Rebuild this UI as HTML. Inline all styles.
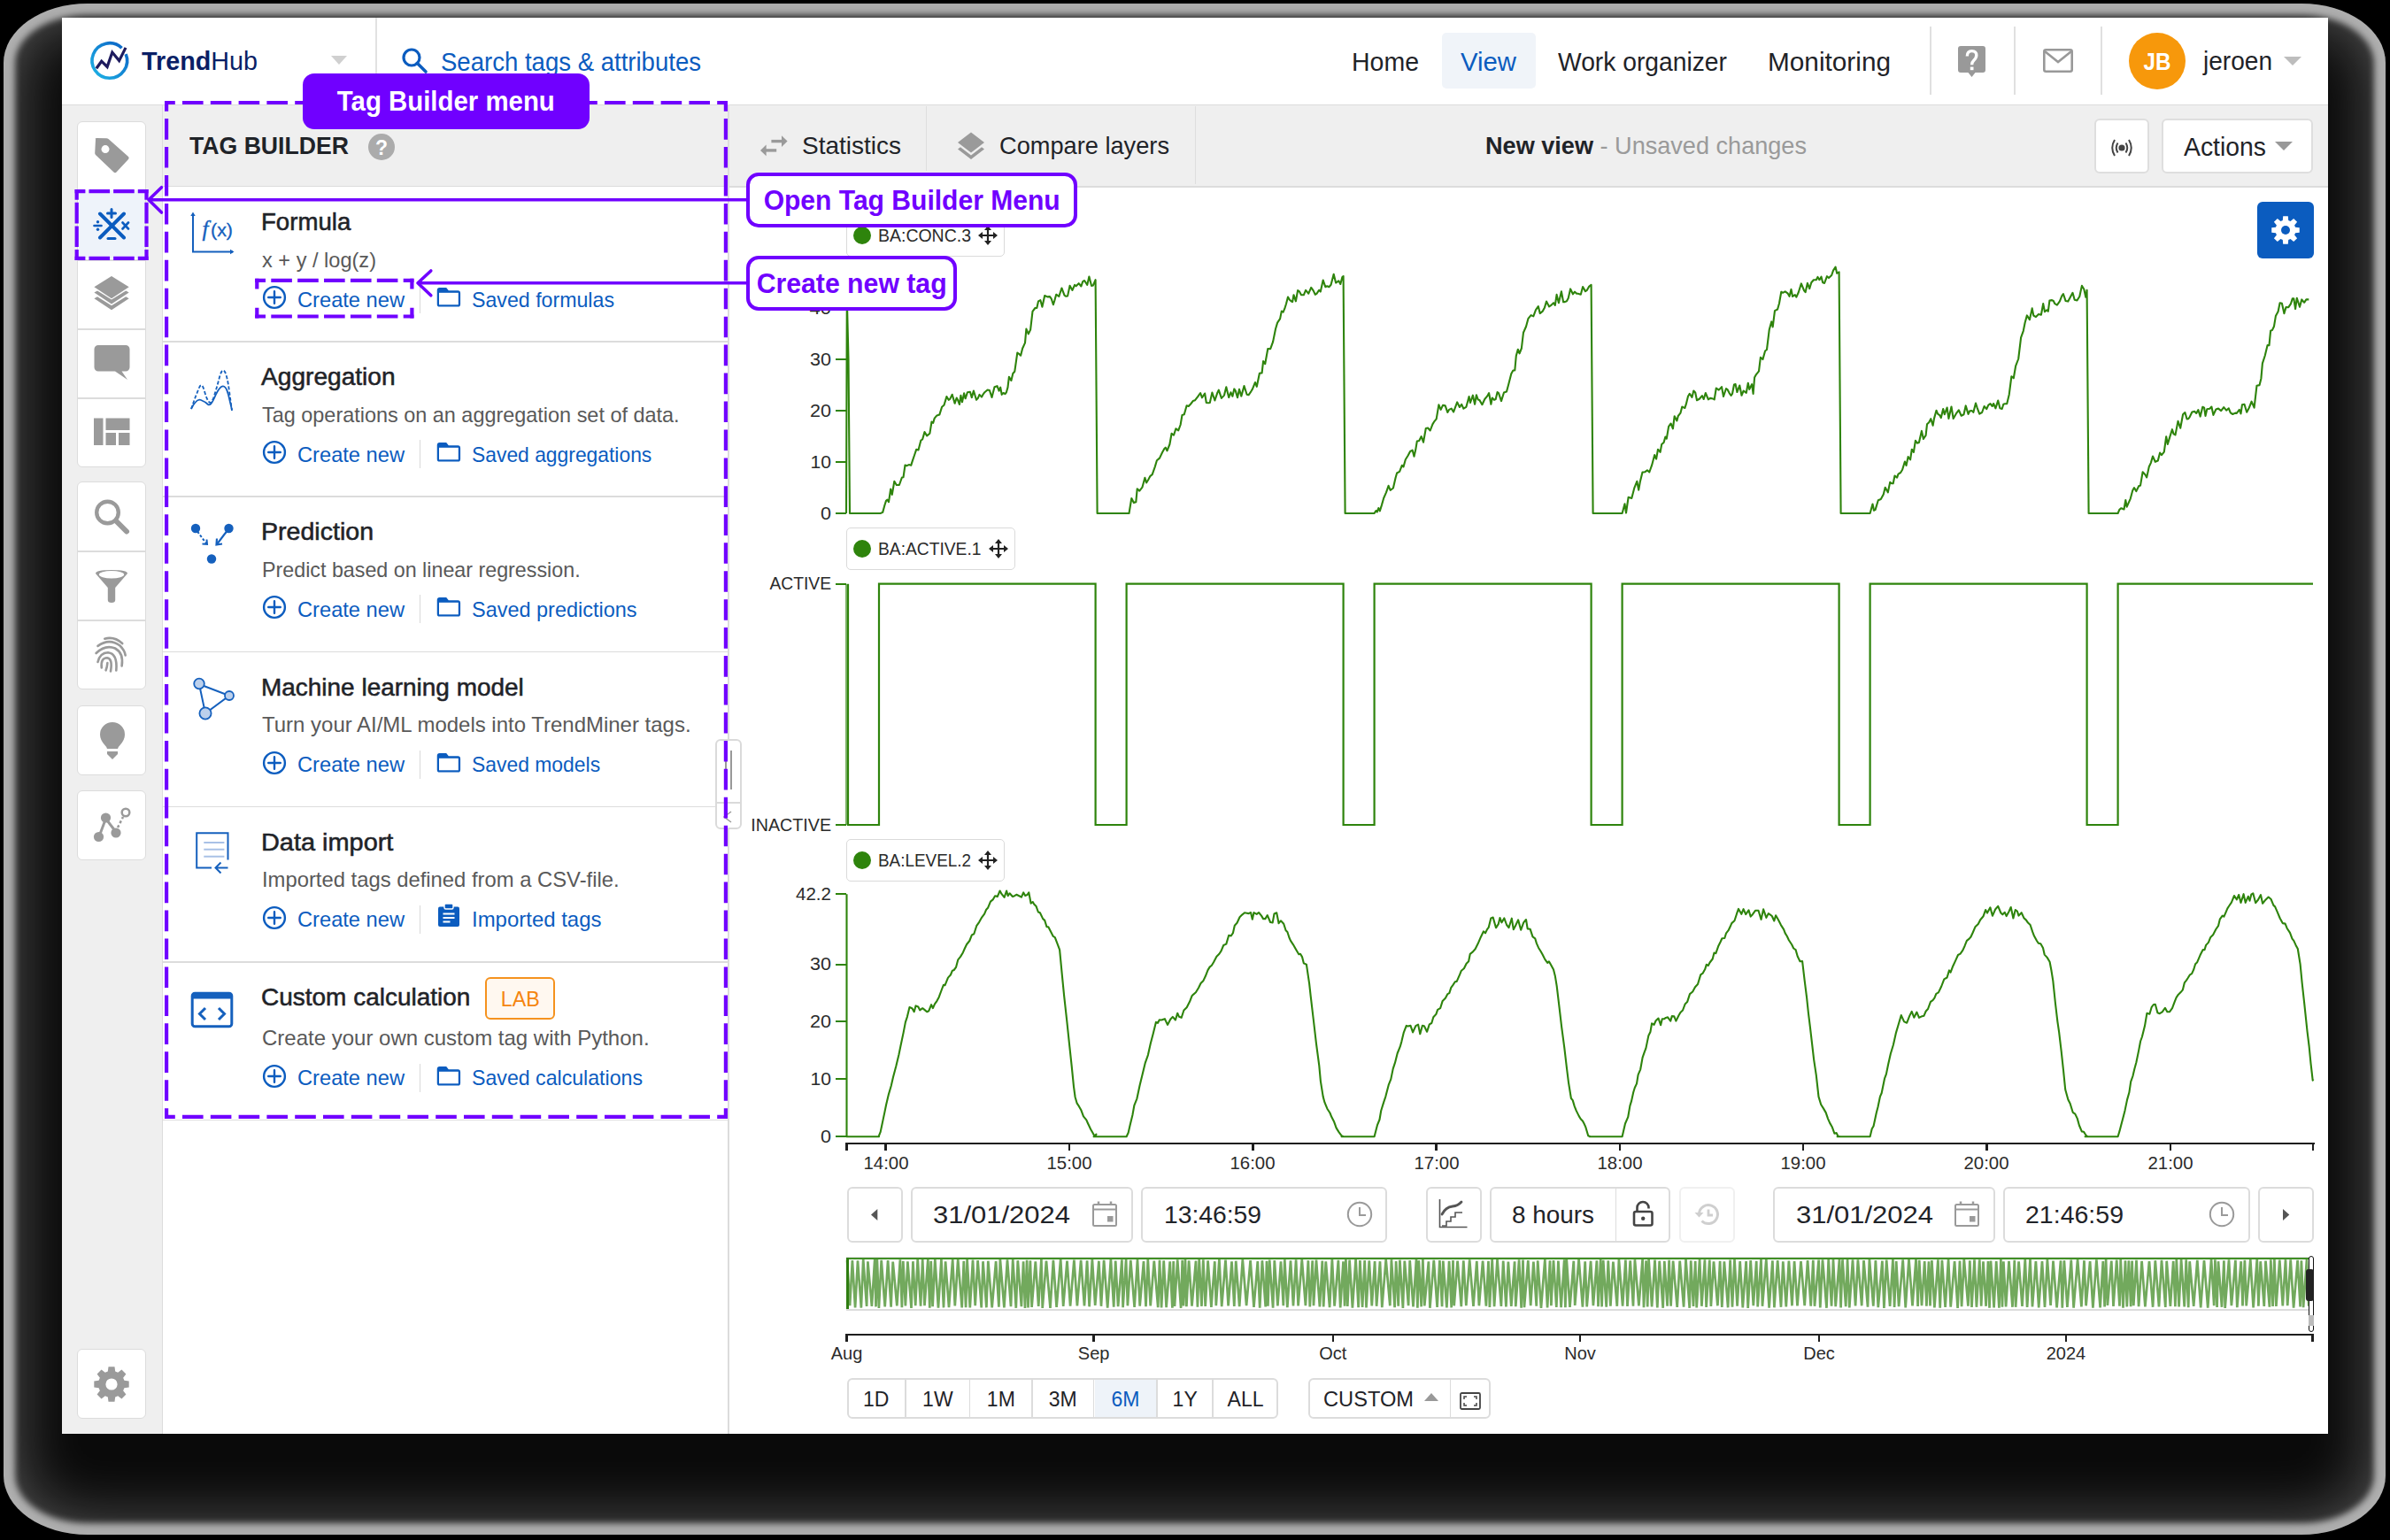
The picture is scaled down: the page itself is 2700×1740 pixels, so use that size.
<!DOCTYPE html><html><head><meta charset="utf-8"><style>
html,body{margin:0;padding:0;}
body{width:2700px;height:1740px;background:#000;position:relative;overflow:hidden;font-family:"Liberation Sans",sans-serif;}
.t{position:absolute;line-height:1;white-space:nowrap;}
.b{position:absolute;box-sizing:border-box;}
.s{position:absolute;overflow:visible;}
</style></head><body>
<div class="b" style="left:4px;top:4px;width:2691px;height:1730px;border-radius:95px / 67px;background:#0a0a0a;box-shadow:inset 0 0 7px 13px rgba(255,255,255,0.58), inset 0 0 70px 16px rgba(255,255,255,0.3);"></div>
<div class="b" style="left:70px;top:20px;width:2560px;height:1600px;background:#fff;overflow:hidden;"></div>
<div class="b" style="left:70px;top:118px;width:2560px;height:1px;background:#dcdcdc;"></div>
<div class="b" style="left:424px;top:20px;width:2px;height:98px;background:#e2e2e2;"></div>
<svg class="s" style="left:102px;top:48px;" width="44" height="44" viewBox="0 0 44 44"><defs><linearGradient id="lg" x1="0" y1="1" x2="1" y2="0"><stop offset="0" stop-color="#1fb5e6"/><stop offset="1" stop-color="#0a5fc4"/></linearGradient></defs>
<path d="M35.55 6.26 A19.8 19.8 0 1 0 40.16 13.08" fill="none" stroke="url(#lg)" stroke-width="3.6"/>
<polyline points="6.9,29.2 12.7,21.2 19.1,27.5 24.8,11.1 32.6,20.6 40,5.9" fill="none" stroke="#1e1b5e" stroke-width="3.2" stroke-linejoin="miter" stroke-linecap="butt"/></svg>
<div class="t" style="left:160.0px;top:54.2px;font-size:30px;color:#0a1f66;font-weight:400;transform:scaleX(0.9581);transform-origin:0 50%;"><b>Trend</b><span style="font-weight:400">Hub</span></div>
<svg class="s" style="left:374px;top:63px;" width="18" height="10" viewBox="0 0 18 10"><path d="M0 0 L18 0 L9 10Z" fill="#d0d0d0"/></svg>
<svg class="s" style="left:453px;top:53px;" width="32" height="32" viewBox="0 0 32 32"><circle cx="12" cy="12" r="9" fill="none" stroke="#0b5cbf" stroke-width="3.2"/><path d="M18.5 18.5 L28 28" stroke="#0b5cbf" stroke-width="3.6" stroke-linecap="round"/></svg>
<div class="t" style="left:498.0px;top:56.0px;font-size:29px;color:#0b5cbf;font-weight:400;transform:scaleX(0.9499);transform-origin:0 50%;">Search tags &amp; attributes</div>
<div class="b" style="left:1629px;top:37px;width:106px;height:63px;background:#f0f4f9;border-radius:5px;"></div>
<div class="t" style="left:1527.0px;top:55.3px;font-size:30px;color:#1f2328;font-weight:400;transform:scaleX(0.9496);transform-origin:0 50%;">Home</div>
<div class="t" style="left:1650.0px;top:55.3px;font-size:30px;color:#0b5cbf;font-weight:400;transform:scaleX(0.9770);transform-origin:0 50%;">View</div>
<div class="t" style="left:1760.0px;top:55.3px;font-size:30px;color:#1f2328;font-weight:400;transform:scaleX(0.9415);transform-origin:0 50%;">Work organizer</div>
<div class="t" style="left:1997.0px;top:55.3px;font-size:30px;color:#1f2328;font-weight:400;transform:scaleX(0.9923);transform-origin:0 50%;">Monitoring</div>
<div class="b" style="left:2180px;top:30px;width:2px;height:77px;background:#e0e0e0;"></div>
<div class="b" style="left:2275px;top:30px;width:2px;height:77px;background:#e0e0e0;"></div>
<div class="b" style="left:2373px;top:30px;width:2px;height:77px;background:#e0e0e0;"></div>
<svg class="s" style="left:2212px;top:52px;" width="31" height="35" viewBox="0 0 31 35"><path d="M3 0 H28 A3 3 0 0 1 31 3 V27 A3 3 0 0 1 28 30 H19.5 L15.5 35 L11.5 30 H3 A3 3 0 0 1 0 27 V3 A3 3 0 0 1 3 0Z" fill="#999"/><path d="M10.3 11.4 Q10.3 5.6 15.6 5.6 Q20.8 5.6 20.8 10.6 Q20.8 13.6 17.8 16.2 Q15.6 18.2 15.6 21.3" fill="none" stroke="#fff" stroke-width="3.4"/><rect x="13.8" y="23.6" width="3.7" height="3.6" fill="#fff"/></svg>
<svg class="s" style="left:2308px;top:55px;" width="34" height="27" viewBox="0 0 34 27"><rect x="1.3" y="1.3" width="31.4" height="24.4" rx="2" fill="none" stroke="#999" stroke-width="2.6"/><path d="M2 3 L17 15 L32 3" fill="none" stroke="#999" stroke-width="2.6"/></svg>
<div class="b" style="left:2405px;top:37px;width:64px;height:64px;background:#f7980b;border-radius:50%;"></div>
<div class="t" style="left:2405.0px;top:55.8px;font-size:28px;color:#fff;font-weight:700;width:64px;text-align:center;transform:scaleX(0.8660);transform-origin:50% 50%;">JB</div>
<div class="t" style="left:2488.5px;top:53.9px;font-size:30px;color:#1f2328;font-weight:400;transform:scaleX(0.9352);transform-origin:0 50%;">jeroen</div>
<svg class="s" style="left:2580px;top:64px;" width="20" height="10" viewBox="0 0 20 10"><path d="M0 0 L20 0 L10 10Z" fill="#bdbdbd"/></svg>
<div class="b" style="left:70px;top:119px;width:114px;height:1501px;background:#efefef;"></div>
<div class="b" style="left:183px;top:119px;width:1px;height:1501px;background:#dcdcdc;"></div>
<div class="b" style="left:87px;top:137px;width:78px;height:391px;background:#fff;border:1.5px solid #dcdcdc;border-radius:6px;"></div>
<div class="b" style="left:88px;top:215px;width:76px;height:1.5px;background:#dcdcdc;"></div>
<div class="b" style="left:88px;top:293px;width:76px;height:1.5px;background:#dcdcdc;"></div>
<div class="b" style="left:88px;top:371px;width:76px;height:1.5px;background:#dcdcdc;"></div>
<div class="b" style="left:88px;top:449px;width:76px;height:1.5px;background:#dcdcdc;"></div>
<div class="b" style="left:87px;top:544px;width:78px;height:235px;background:#fff;border:1.5px solid #dcdcdc;border-radius:6px;"></div>
<div class="b" style="left:88px;top:622px;width:76px;height:1.5px;background:#dcdcdc;"></div>
<div class="b" style="left:88px;top:700px;width:76px;height:1.5px;background:#dcdcdc;"></div>
<div class="b" style="left:87px;top:797px;width:78px;height:79px;background:#fff;border:1.5px solid #dcdcdc;border-radius:6px;"></div>
<div class="b" style="left:87px;top:893px;width:78px;height:79px;background:#fff;border:1.5px solid #dcdcdc;border-radius:6px;"></div>
<div class="b" style="left:87px;top:1524px;width:78px;height:79px;background:#fff;border:1.5px solid #dcdcdc;border-radius:6px;"></div>
<div class="b" style="left:88.5px;top:215px;width:75px;height:77px;background:#eef3fa;"></div>
<svg class="s" style="left:104px;top:154px;" width="44" height="44" viewBox="0 0 44 44"><path d="M4 3.5 Q3 2 5 2 L16.5 2.2 Q17.5 2.2 18.5 3 L41 23 Q42.5 24.5 41 26 L27.5 40.5 Q26 42 24.5 40.5 L4 21 Q3.2 20 3.2 19 Z" fill="#9a9a9a"/><circle cx="15" cy="14.6" r="4.5" fill="#fff"/></svg>
<svg class="s" style="left:104px;top:232px;" width="44" height="44" viewBox="0 0 44 44"><g stroke="#0b5cbf" stroke-linecap="round" fill="none">
<path d="M9 9.5 L36 36.5 M36 9.5 L9 36.5" stroke-width="4"/>
<path d="M22 4.5 V13.5 M17.5 9 H26.5" stroke-width="3"/>
<path d="M18 37.5 H26" stroke-width="3"/>
<path d="M2.5 23 H10.5" stroke-width="2.6"/>
<path d="M34.5 19.5 L41 26.5 M41 19.5 L34.5 26.5" stroke-width="2.6"/>
</g><circle cx="6.5" cy="18.8" r="1.7" fill="#0b5cbf"/><circle cx="6.5" cy="27.2" r="1.7" fill="#0b5cbf"/></svg>
<svg class="s" style="left:104px;top:310px;" width="44" height="44" viewBox="0 0 44 44"><path d="M2.4 14.3 L22 2 L41.7 14.3 L22 27.3Z" fill="#9a9a9a"/><path d="M2.4 20.5 L6 18.4 L22 28.6 L38.2 18.4 L41.7 20.5 L22 33.6Z" fill="#9a9a9a"/><path d="M2.4 27.3 L6 25.2 L22 35.3 L38.2 25.2 L41.7 27.3 L22 40.2Z" fill="#9a9a9a"/></svg>
<svg class="s" style="left:104px;top:388px;" width="44" height="44" viewBox="0 0 44 44"><path d="M7 2 H38 A4.5 4.5 0 0 1 42.5 6.5 V27 A4.5 4.5 0 0 1 38 31.5 H33.5 L40 41 L26 31.5 H7 A4.5 4.5 0 0 1 2.5 27 V6.5 A4.5 4.5 0 0 1 7 2Z" fill="#9a9a9a"/></svg>
<svg class="s" style="left:104px;top:470px;" width="44" height="36" viewBox="0 0 44 36"><rect x="2" y="2.5" width="10.5" height="30.5" fill="#9a9a9a"/><rect x="15.5" y="2.5" width="27" height="13.5" fill="#9a9a9a"/><rect x="15.5" y="19" width="11.5" height="14" fill="#9a9a9a"/><rect x="30" y="19" width="12.5" height="14" fill="#9a9a9a"/></svg>
<svg class="s" style="left:104px;top:562px;" width="44" height="44" viewBox="0 0 44 44"><circle cx="17.5" cy="17" r="12.3" fill="none" stroke="#9a9a9a" stroke-width="4.4"/><path d="M27 26.5 L39 38.5" stroke="#9a9a9a" stroke-width="6" stroke-linecap="round"/></svg>
<svg class="s" style="left:104px;top:642px;" width="44" height="40" viewBox="0 0 44 40"><path d="M4 6 Q4 2 22 2 Q40 2 40 6 L26.2 22 V36 Q26.2 39 22 39 Q17.8 39 17.8 36 V22 Z" fill="#9a9a9a"/><ellipse cx="22" cy="7.2" rx="14.2" ry="4.2" fill="#fff"/></svg>
<svg class="s" style="left:100px;top:710px;" width="52" height="60" viewBox="0 0 52 60"><g fill="none" stroke="#9a9a9a" stroke-width="2.6" stroke-linecap="round">
<path d="M18.3 11.7 Q29 8.6 38.2 17"/>
<path d="M10.5 19.9 Q23.5 10.5 35.5 19.5 Q41 25 41.7 30.5"/>
<path d="M8.6 28 Q19 18 30 22.5 Q40 28 37.6 42.5"/>
<path d="M10.5 38 Q13 27.5 22 27.3 Q33 28.5 31.3 47.5"/>
<path d="M14.8 44.5 Q13.5 33.5 21 33.3 Q27.5 34 25 48.5"/>
<path d="M21.4 39 Q21 44 19.6 47.3"/>
</g></svg>
<svg class="s" style="left:110px;top:814px;" width="34" height="46" viewBox="0 0 34 46"><path d="M17 2 A14 14 0 0 1 31 16 Q31 22 25.5 28 Q23 30.5 23 32 H11 Q11 30.5 8.5 28 Q3 22 3 16 A14 14 0 0 1 17 2Z" fill="#9a9a9a"/><path d="M11 35 H23 V38 Q20 41 17 44 Q14 41 11 38Z" fill="#9a9a9a"/></svg>
<svg class="s" style="left:104px;top:910px;" width="44" height="44" viewBox="0 0 44 44"><g stroke="#9a9a9a" stroke-width="3" fill="none"><path d="M8 35 L15.5 15 L27 30"/></g><circle cx="15.5" cy="14" r="5.6" fill="#9a9a9a"/><circle cx="7.5" cy="35.5" r="5.6" fill="#9a9a9a"/><circle cx="27" cy="31" r="5.6" fill="#9a9a9a"/><path d="M29 25 L35 13" stroke="#9a9a9a" stroke-width="2.5" stroke-dasharray="3 2.5"/><circle cx="38" cy="8" r="4.3" fill="none" stroke="#9a9a9a" stroke-width="2.5"/></svg>
<svg class="s" style="left:104px;top:1542px;" width="44" height="44" viewBox="0 0 44 44"><path d="M36.40 17.82 L41.69 18.51 L41.69 25.49 L36.40 26.18 L35.14 29.23 L38.39 33.46 L33.46 38.39 L29.23 35.14 L26.18 36.40 L25.49 41.69 L18.51 41.69 L17.82 36.40 L14.77 35.14 L10.54 38.39 L5.61 33.46 L8.86 29.23 L7.60 26.18 L2.31 25.49 L2.31 18.51 L7.60 17.82 L8.86 14.77 L5.61 10.54 L10.54 5.61 L14.77 8.86 L17.82 7.60 L18.51 2.31 L25.49 2.31 L26.18 7.60 L29.23 8.86 L33.46 5.61 L38.39 10.54 L35.14 14.77Z" fill="#9a9a9a"/><circle cx="22" cy="22" r="6.6" fill="#fff"/></svg>
<div class="b" style="left:184px;top:119px;width:638px;height:92px;background:#efefef;"></div>
<div class="b" style="left:184px;top:210px;width:638px;height:1px;background:#dcdcdc;"></div>
<div class="b" style="left:184px;top:211px;width:638px;height:1409px;background:#fff;"></div>
<div class="b" style="left:822px;top:119px;width:1.5px;height:1501px;background:#dcdcdc;"></div>
<div class="t" style="left:213.5px;top:150.9px;font-size:28px;color:#1f2328;font-weight:700;transform:scaleX(0.9511);transform-origin:0 50%;">TAG BUILDER</div>
<svg class="s" style="left:416px;top:151px;" width="30" height="30" viewBox="0 0 30 30"><circle cx="15" cy="15" r="15" fill="#ababab"/><text x="15" y="23.5" font-family="Liberation Sans" font-weight="700" font-size="23" fill="#fff" text-anchor="middle">?</text></svg>
<div class="b" style="left:184px;top:385px;width:638px;height:1.5px;background:#dcdcdc;"></div>
<div class="t" style="left:294.5px;top:237.3px;font-size:28px;color:#1f2328;font-weight:400;-webkit-text-stroke:0.55px #1f2328;transform:scaleX(0.9863);transform-origin:0 50%;">Formula</div>
<div class="t" style="left:295.5px;top:281.7px;font-size:24px;color:#595959;font-weight:400;transform:scaleX(0.9819);transform-origin:0 50%;">x + y / log(z)</div>
<svg class="s" style="left:297px;top:323px;" width="26" height="26" viewBox="0 0 26 26"><circle cx="13" cy="13" r="11.9" fill="none" stroke="#0b5cbf" stroke-width="2.4"/><path d="M13 6.2 V19.8 M6.2 13 H19.8" stroke="#0b5cbf" stroke-width="2.4" stroke-linecap="round"/></svg>
<div class="t" style="left:336.0px;top:326.7px;font-size:24px;color:#0b5cbf;font-weight:400;transform:scaleX(0.9859);transform-origin:0 50%;">Create new</div>
<div class="b" style="left:473.5px;top:322px;width:1.5px;height:32px;background:#d9d9d9;"></div>
<svg class="s" style="left:493px;top:324px;" width="28" height="24" viewBox="0 0 28 24"><path d="M0.75 4 Q0.75 1.1 3.6 1.1 H11.2 L13.8 4.3 H24.3 Q27.1 4.3 27.1 7.2 V19.7 Q27.1 22.6 24.3 22.6 H3.6 Q0.75 22.6 0.75 19.7 Z" fill="#0b5cbf"/><rect x="3" y="6.8" width="21.8" height="13.5" fill="#fff"/></svg>
<div class="t" style="left:532.5px;top:326.7px;font-size:24px;color:#0b5cbf;font-weight:400;transform:scaleX(0.9655);transform-origin:0 50%;">Saved formulas</div>
<div class="b" style="left:184px;top:560px;width:638px;height:1.5px;background:#dcdcdc;"></div>
<div class="t" style="left:294.5px;top:412.3px;font-size:28px;color:#1f2328;font-weight:400;-webkit-text-stroke:0.55px #1f2328;transform:scaleX(1.0039);transform-origin:0 50%;">Aggregation</div>
<div class="t" style="left:295.5px;top:456.7px;font-size:24px;color:#595959;font-weight:400;transform:scaleX(0.9763);transform-origin:0 50%;">Tag operations on an aggregation set of data.</div>
<svg class="s" style="left:297px;top:498px;" width="26" height="26" viewBox="0 0 26 26"><circle cx="13" cy="13" r="11.9" fill="none" stroke="#0b5cbf" stroke-width="2.4"/><path d="M13 6.2 V19.8 M6.2 13 H19.8" stroke="#0b5cbf" stroke-width="2.4" stroke-linecap="round"/></svg>
<div class="t" style="left:336.0px;top:501.7px;font-size:24px;color:#0b5cbf;font-weight:400;transform:scaleX(0.9859);transform-origin:0 50%;">Create new</div>
<div class="b" style="left:473.5px;top:497px;width:1.5px;height:32px;background:#d9d9d9;"></div>
<svg class="s" style="left:493px;top:499px;" width="28" height="24" viewBox="0 0 28 24"><path d="M0.75 4 Q0.75 1.1 3.6 1.1 H11.2 L13.8 4.3 H24.3 Q27.1 4.3 27.1 7.2 V19.7 Q27.1 22.6 24.3 22.6 H3.6 Q0.75 22.6 0.75 19.7 Z" fill="#0b5cbf"/><rect x="3" y="6.8" width="21.8" height="13.5" fill="#fff"/></svg>
<div class="t" style="left:532.5px;top:501.7px;font-size:24px;color:#0b5cbf;font-weight:400;transform:scaleX(0.9522);transform-origin:0 50%;">Saved aggregations</div>
<div class="b" style="left:184px;top:735.5px;width:638px;height:1.5px;background:#dcdcdc;"></div>
<div class="t" style="left:294.5px;top:587.3px;font-size:28px;color:#1f2328;font-weight:400;-webkit-text-stroke:0.55px #1f2328;transform:scaleX(1.0208);transform-origin:0 50%;">Prediction</div>
<div class="t" style="left:295.5px;top:631.7px;font-size:24px;color:#595959;font-weight:400;transform:scaleX(0.9696);transform-origin:0 50%;">Predict based on linear regression.</div>
<svg class="s" style="left:297px;top:673px;" width="26" height="26" viewBox="0 0 26 26"><circle cx="13" cy="13" r="11.9" fill="none" stroke="#0b5cbf" stroke-width="2.4"/><path d="M13 6.2 V19.8 M6.2 13 H19.8" stroke="#0b5cbf" stroke-width="2.4" stroke-linecap="round"/></svg>
<div class="t" style="left:336.0px;top:676.7px;font-size:24px;color:#0b5cbf;font-weight:400;transform:scaleX(0.9859);transform-origin:0 50%;">Create new</div>
<div class="b" style="left:473.5px;top:672px;width:1.5px;height:32px;background:#d9d9d9;"></div>
<svg class="s" style="left:493px;top:674px;" width="28" height="24" viewBox="0 0 28 24"><path d="M0.75 4 Q0.75 1.1 3.6 1.1 H11.2 L13.8 4.3 H24.3 Q27.1 4.3 27.1 7.2 V19.7 Q27.1 22.6 24.3 22.6 H3.6 Q0.75 22.6 0.75 19.7 Z" fill="#0b5cbf"/><rect x="3" y="6.8" width="21.8" height="13.5" fill="#fff"/></svg>
<div class="t" style="left:532.5px;top:676.7px;font-size:24px;color:#0b5cbf;font-weight:400;transform:scaleX(0.9776);transform-origin:0 50%;">Saved predictions</div>
<div class="b" style="left:184px;top:910.5px;width:638px;height:1.5px;background:#dcdcdc;"></div>
<div class="t" style="left:294.5px;top:762.8px;font-size:28px;color:#1f2328;font-weight:400;-webkit-text-stroke:0.55px #1f2328;transform:scaleX(0.9984);transform-origin:0 50%;">Machine learning model</div>
<div class="t" style="left:295.5px;top:807.2px;font-size:24px;color:#595959;font-weight:400;transform:scaleX(0.9989);transform-origin:0 50%;">Turn your AI/ML models into TrendMiner tags.</div>
<svg class="s" style="left:297px;top:848.5px;" width="26" height="26" viewBox="0 0 26 26"><circle cx="13" cy="13" r="11.9" fill="none" stroke="#0b5cbf" stroke-width="2.4"/><path d="M13 6.2 V19.8 M6.2 13 H19.8" stroke="#0b5cbf" stroke-width="2.4" stroke-linecap="round"/></svg>
<div class="t" style="left:336.0px;top:852.2px;font-size:24px;color:#0b5cbf;font-weight:400;transform:scaleX(0.9859);transform-origin:0 50%;">Create new</div>
<div class="b" style="left:473.5px;top:847.5px;width:1.5px;height:32px;background:#d9d9d9;"></div>
<svg class="s" style="left:493px;top:849.5px;" width="28" height="24" viewBox="0 0 28 24"><path d="M0.75 4 Q0.75 1.1 3.6 1.1 H11.2 L13.8 4.3 H24.3 Q27.1 4.3 27.1 7.2 V19.7 Q27.1 22.6 24.3 22.6 H3.6 Q0.75 22.6 0.75 19.7 Z" fill="#0b5cbf"/><rect x="3" y="6.8" width="21.8" height="13.5" fill="#fff"/></svg>
<div class="t" style="left:532.5px;top:852.2px;font-size:24px;color:#0b5cbf;font-weight:400;transform:scaleX(0.9540);transform-origin:0 50%;">Saved models</div>
<div class="b" style="left:184px;top:1086.0px;width:638px;height:1.5px;background:#dcdcdc;"></div>
<div class="t" style="left:294.5px;top:937.8px;font-size:28px;color:#1f2328;font-weight:400;-webkit-text-stroke:0.55px #1f2328;transform:scaleX(1.0323);transform-origin:0 50%;">Data import</div>
<div class="t" style="left:295.5px;top:982.2px;font-size:24px;color:#595959;font-weight:400;transform:scaleX(0.9920);transform-origin:0 50%;">Imported tags defined from a CSV-file.</div>
<svg class="s" style="left:297px;top:1023.5px;" width="26" height="26" viewBox="0 0 26 26"><circle cx="13" cy="13" r="11.9" fill="none" stroke="#0b5cbf" stroke-width="2.4"/><path d="M13 6.2 V19.8 M6.2 13 H19.8" stroke="#0b5cbf" stroke-width="2.4" stroke-linecap="round"/></svg>
<div class="t" style="left:336.0px;top:1027.2px;font-size:24px;color:#0b5cbf;font-weight:400;transform:scaleX(0.9859);transform-origin:0 50%;">Create new</div>
<div class="b" style="left:473.5px;top:1022.5px;width:1.5px;height:32px;background:#d9d9d9;"></div>
<svg class="s" style="left:494px;top:1019.5px;" width="26" height="28" viewBox="0 0 26 28"><path d="M3 4.5 H23 Q25 4.5 25 6.5 V25 Q25 27 23 27 H3 Q1 27 1 25 V6.5 Q1 4.5 3 4.5Z" fill="#0b5cbf"/><rect x="8" y="1" width="10" height="6" rx="1.5" fill="#0b5cbf" stroke="#fff" stroke-width="1.4"/><path d="M6.5 12.5 H19.5 M6.5 17 H19.5 M6.5 21.5 H14.5" stroke="#fff" stroke-width="2.2"/></svg>
<div class="t" style="left:532.5px;top:1027.2px;font-size:24px;color:#0b5cbf;font-weight:400;transform:scaleX(0.9983);transform-origin:0 50%;">Imported tags</div>
<div class="b" style="left:184px;top:1264.5px;width:638px;height:1.5px;background:#dcdcdc;"></div>
<div class="t" style="left:294.5px;top:1112.8px;font-size:28px;color:#1f2328;font-weight:400;-webkit-text-stroke:0.55px #1f2328;transform:scaleX(0.9993);transform-origin:0 50%;">Custom calculation</div>
<div class="t" style="left:295.5px;top:1161.2px;font-size:24px;color:#595959;font-weight:400;transform:scaleX(1.0001);transform-origin:0 50%;">Create your own custom tag with Python.</div>
<svg class="s" style="left:297px;top:1202.5px;" width="26" height="26" viewBox="0 0 26 26"><circle cx="13" cy="13" r="11.9" fill="none" stroke="#0b5cbf" stroke-width="2.4"/><path d="M13 6.2 V19.8 M6.2 13 H19.8" stroke="#0b5cbf" stroke-width="2.4" stroke-linecap="round"/></svg>
<div class="t" style="left:336.0px;top:1206.2px;font-size:24px;color:#0b5cbf;font-weight:400;transform:scaleX(0.9859);transform-origin:0 50%;">Create new</div>
<div class="b" style="left:473.5px;top:1201.5px;width:1.5px;height:32px;background:#d9d9d9;"></div>
<svg class="s" style="left:493px;top:1203.5px;" width="28" height="24" viewBox="0 0 28 24"><path d="M0.75 4 Q0.75 1.1 3.6 1.1 H11.2 L13.8 4.3 H24.3 Q27.1 4.3 27.1 7.2 V19.7 Q27.1 22.6 24.3 22.6 H3.6 Q0.75 22.6 0.75 19.7 Z" fill="#0b5cbf"/><rect x="3" y="6.8" width="21.8" height="13.5" fill="#fff"/></svg>
<div class="t" style="left:532.5px;top:1206.2px;font-size:24px;color:#0b5cbf;font-weight:400;transform:scaleX(0.9644);transform-origin:0 50%;">Saved calculations</div>
<div class="b" style="left:547.5px;top:1104px;width:79.5px;height:47.5px;border:2px solid #f5921e;border-radius:6px;background:#fff8f0;"></div>
<div class="t" style="left:547.5px;top:1117.2px;font-size:24px;color:#f5850f;font-weight:400;width:79.5px;text-align:center;transform:scaleX(0.9697);transform-origin:50% 50%;">LAB</div>
<svg class="s" style="left:214px;top:238px;" width="52" height="50" viewBox="0 0 52 50"><path d="M4 3 V46.5 H49" fill="none" stroke="#1560bd" stroke-width="2"/>
<path d="M1.3 6 L4 1.5 L6.7 6Z" fill="#1560bd"/><path d="M46 43.8 L50.5 46.5 L46 49.2Z" fill="#1560bd"/>
<text x="14.5" y="29" font-family="Liberation Serif" font-style="italic" font-size="25" fill="#1560bd" stroke="#1560bd" stroke-width="0.4">f</text>
<text x="24" y="28.5" font-family="Liberation Sans" font-size="21" fill="#1560bd" stroke="#1560bd" stroke-width="0.3" textLength="25" lengthAdjust="spacingAndGlyphs">(x)</text></svg>
<svg class="s" style="left:214px;top:412px;" width="52" height="54" viewBox="0 0 52 54"><path d="M2 50 Q6 38 11 26 Q14 19 17 30 Q19 38 22 42 Q24 45 27 38 Q31 26 34 14 Q37 3 40 8 Q43 14 45 30 L48 52" fill="none" stroke="#1560bd" stroke-width="1.8" stroke-dasharray="4 2.2"/>
<path d="M2 50 Q8 38 13 40 Q18 42 21 45 Q24 47 28 38 Q32 28 36 25 Q41 22 44 34 L48 51" fill="none" stroke="#1560bd" stroke-width="1.8"/></svg>
<svg class="s" style="left:214px;top:592px;" width="52" height="50" viewBox="0 0 52 50"><circle cx="7" cy="5" r="5.2" fill="#1560bd"/><circle cx="44.5" cy="5" r="5.2" fill="#1560bd"/><circle cx="25" cy="39.5" r="5.2" fill="#1560bd"/>
<path d="M9 8.5 L19 22" stroke="#1560bd" stroke-width="2" stroke-dasharray="3 2"/><path d="M14.5 22.5 L20 23 L19.5 17.5" fill="none" stroke="#1560bd" stroke-width="2"/>
<path d="M42 8.5 L31 23" stroke="#1560bd" stroke-width="2.2"/><path d="M31 16.5 L30.5 23.5 L37 22.5" fill="none" stroke="#1560bd" stroke-width="2.2"/></svg>
<svg class="s" style="left:215px;top:766px;" width="52" height="50" viewBox="0 0 52 50"><path d="M10 7 L44 20 L17 40Z" fill="none" stroke="#1560bd" stroke-width="2"/>
<circle cx="10" cy="6.5" r="5.8" fill="#bcd0ec" stroke="#1560bd" stroke-width="1.8"/><circle cx="44" cy="20" r="5" fill="#bcd0ec" stroke="#1560bd" stroke-width="1.8"/><circle cx="17" cy="40" r="6.6" fill="#bcd0ec" stroke="#1560bd" stroke-width="1.8"/></svg>
<svg class="s" style="left:214px;top:938px;" width="52" height="54" viewBox="0 0 52 54"><path d="M43.5 33.5 V3.3 H8.2 V42.5 H25" fill="none" stroke="#1560bd" stroke-width="2"/>
<path d="M16.3 14 H39.4 M16.3 21.8 H39.4 M16.3 29.7 H39.4" stroke="#a9c1e6" stroke-width="2"/>
<path d="M43.5 42.5 H29.5 M35.5 36.5 L29.5 42.5 L35.5 48.5" fill="none" stroke="#1560bd" stroke-width="2"/></svg>
<svg class="s" style="left:214.5px;top:1118.5px;" width="52" height="44" viewBox="0 0 52 44"><rect x="2.2" y="3.2" width="44.6" height="37.6" rx="3" fill="none" stroke="#1560bd" stroke-width="3"/><path d="M2.2 6 Q2.2 3.2 5 3.2 H44 Q46.8 3.2 46.8 6 V9.5 H2.2Z" fill="#1560bd"/>
<path d="M17 20 L10.5 26.5 L17 33 M32 20 L38.5 26.5 L32 33" fill="none" stroke="#1560bd" stroke-width="3"/></svg>
<div class="b" style="left:808px;top:834.5px;width:30px;height:102.5px;background:#fff;border:2px solid #dadada;border-radius:6px;"></div>
<div class="b" style="left:809px;top:906px;width:28px;height:1.5px;background:#dadada;"></div>
<div class="b" style="left:825px;top:848px;width:2px;height:44px;background:#999;"></div>
<div class="b" style="left:819px;top:848px;width:1.5px;height:44px;background:#999;"></div>
<svg class="s" style="left:815px;top:916px;" width="14" height="14" viewBox="0 0 14 14"><path d="M11 1 L3 7 L11 13" fill="none" stroke="#999" stroke-width="1.5"/></svg>
<div class="b" style="left:823.5px;top:119px;width:1806.5px;height:91px;background:#efefef;"></div>
<div class="b" style="left:823.5px;top:210px;width:1806.5px;height:1.5px;background:#dcdcdc;"></div>
<div class="b" style="left:1045.5px;top:120px;width:1.5px;height:73px;background:#dedede;"></div>
<div class="b" style="left:1349.5px;top:120px;width:1.5px;height:88px;background:#dedede;"></div>
<svg class="s" style="left:857px;top:152px;" width="34" height="28" viewBox="0 0 34 28"><path d="M14.4 7.6 H27" stroke="#9a9a9a" stroke-width="3.4"/><path d="M26 1.3 L32.6 7.6 L26 13.9Z" fill="#9a9a9a"/><path d="M8 17.9 H20.2" stroke="#9a9a9a" stroke-width="3.4"/><path d="M8.6 11.6 L2 17.9 L8.6 24.2Z" fill="#9a9a9a"/></svg>
<div class="t" style="left:905.5px;top:151.1px;font-size:28px;color:#1f2328;font-weight:400;transform:scaleX(0.9997);transform-origin:0 50%;">Statistics</div>
<svg class="s" style="left:1080px;top:144.5px;" width="34" height="34" viewBox="0 0 34 34"><path d="M2 16 L17 4.5 L32 16 L17 27.5Z" fill="#9a9a9a"/><path d="M2 23.5 L5 21.3 L17 30.4 L29 21.3 L32 23.5 L17 35Z" fill="#9a9a9a"/></svg>
<div class="t" style="left:1129.0px;top:151.1px;font-size:28px;color:#1f2328;font-weight:400;transform:scaleX(0.9715);transform-origin:0 50%;">Compare layers</div>
<div class="t" style="left:1678.0px;top:151.3px;font-size:28px;color:#1f2328;font-weight:400;transform:scaleX(0.9677);transform-origin:0 50%;"><b>New view</b><span style="color:#9a9a9a"> - Unsaved changes</span></div>
<div class="b" style="left:2366px;top:134px;width:62px;height:62px;background:#fff;border:2px solid #dedede;border-radius:6px;"></div>
<svg class="s" style="left:2381px;top:153.5px;" width="32" height="26" viewBox="0 0 32 26"><g fill="none" stroke="#444" stroke-width="2"><path d="M8 4 Q2.5 13 8 22"/><path d="M11.5 7.5 Q8 13 11.5 18.5"/><path d="M24 4 Q29.5 13 24 22"/><path d="M20.5 7.5 Q24 13 20.5 18.5"/></g><circle cx="16" cy="13" r="3.6" fill="#444"/></svg>
<div class="b" style="left:2442px;top:134px;width:171px;height:62px;background:#fff;border:2px solid #dedede;border-radius:6px;"></div>
<div class="t" style="left:2467.0px;top:151.5px;font-size:29px;color:#1f2328;font-weight:400;transform:scaleX(0.9778);transform-origin:0 50%;">Actions</div>
<svg class="s" style="left:2570px;top:160px;" width="20" height="10" viewBox="0 0 20 10"><path d="M0 0 L20 0 L10 10Z" fill="#999"/></svg>
<div class="b" style="left:2550px;top:228px;width:64px;height:64px;background:#0b5cbf;border-radius:6px;"></div>
<svg class="s" style="left:2566px;top:244px;" width="32" height="32" viewBox="0 0 32 32"><path d="M27.04 12.79 L31.75 13.21 L31.75 18.79 L27.04 19.21 L26.08 21.54 L29.11 25.17 L25.17 29.11 L21.54 26.08 L19.21 27.04 L18.79 31.75 L13.21 31.75 L12.79 27.04 L10.46 26.08 L6.83 29.11 L2.89 25.17 L5.92 21.54 L4.96 19.21 L0.25 18.79 L0.25 13.21 L4.96 12.79 L5.92 10.46 L2.89 6.83 L6.83 2.89 L10.46 5.92 L12.79 4.96 L13.21 0.25 L18.79 0.25 L19.21 4.96 L21.54 5.92 L25.17 2.89 L29.11 6.83 L26.08 10.46Z" fill="#fff"/><circle cx="16" cy="16" r="5" fill="#0b5cbf"/></svg>
<svg class="s" style="left:0px;top:0px;pointer-events:none;" width="2700" height="1740" viewBox="0 0 2700 1740"><polyline points="956.0,580.0 956.8,336.4 958.5,406.0 960.0,580.0 992.6,580.0 994.6,580.0 997.2,578.9 999.5,570.5 1001.0,565.9 1002.5,564.6 1004.0,567.2 1006.2,552.5 1007.8,558.9 1010.3,543.8 1012.8,548.0 1015.9,548.0 1018.9,539.5 1020.5,539.3 1022.5,525.5 1024.2,526.2 1026.8,525.1 1029.2,525.8 1030.7,521.2 1033.3,513.5 1035.2,507.8 1037.5,508.4 1040.3,497.7 1042.1,496.5 1044.5,488.1 1047.2,492.4 1050.4,489.7 1052.5,476.5 1054.2,477.8 1055.7,472.6 1058.4,469.4 1061.4,468.4 1064.1,459.8 1066.5,457.8 1069.4,448.1 1071.7,451.8 1073.2,450.9 1075.7,445.8 1078.6,455.8 1080.7,449.5 1082.2,452.3 1083.9,457.0 1085.4,446.8 1087.0,454.3 1089.1,444.4 1090.6,450.3 1093.0,443.2 1095.9,442.8 1097.8,449.1 1099.9,441.5 1103.0,451.8 1104.7,450.1 1106.5,445.9 1109.0,448.6 1110.4,445.9 1112.4,443.2 1115.6,440.5 1117.9,441.0 1120.5,448.9 1123.5,437.2 1126.5,436.2 1128.6,441.7 1130.2,437.7 1131.7,445.9 1133.5,444.0 1135.5,445.2 1136.9,443.3 1138.5,437.6 1139.9,425.9 1142.4,430.0 1144.3,422.0 1146.3,419.7 1149.3,398.6 1151.5,400.2 1153.1,401.7 1155.1,393.7 1158.0,387.4 1159.4,371.6 1161.8,377.3 1164.1,372.6 1166.5,351.8 1169.4,348.0 1171.3,347.9 1173.0,340.4 1175.4,339.2 1177.4,346.7 1180.2,334.0 1183.2,335.4 1186.0,335.1 1187.8,337.7 1189.9,344.2 1191.3,339.8 1193.2,332.7 1196.3,335.0 1199.4,325.5 1202.5,333.6 1204.3,334.8 1206.1,334.4 1208.6,322.8 1211.5,327.9 1214.1,321.9 1215.6,323.3 1218.7,320.2 1221.4,323.5 1223.2,318.1 1225.1,317.0 1228.3,321.8 1230.4,312.5 1233.1,323.0 1234.8,322.6 1237.6,316.1 1239.6,580.0 1272.6,580.0 1272.6,580.0 1275.5,580.0 1278.3,563.0 1280.9,568.1 1283.3,567.3 1284.7,552.3 1287.3,554.6 1290.4,550.7 1293.4,539.8 1295.1,545.4 1297.1,542.3 1299.5,537.8 1301.7,536.1 1304.7,527.6 1306.9,520.3 1310.0,517.6 1313.0,511.2 1315.4,506.9 1316.8,505.7 1318.5,509.3 1321.4,502.0 1323.6,489.8 1326.0,491.7 1328.4,484.3 1331.2,486.3 1333.6,480.0 1335.5,468.9 1337.8,468.2 1340.6,458.2 1342.8,458.9 1345.1,456.5 1347.7,453.1 1350.1,452.2 1353.2,448.2 1356.1,444.0 1358.0,449.3 1361.1,444.5 1362.8,455.0 1365.0,455.3 1366.8,454.9 1369.4,443.6 1372.4,452.5 1375.1,444.3 1376.8,440.6 1379.9,449.9 1383.0,446.6 1385.3,437.2 1388.2,449.1 1390.4,443.3 1392.4,447.7 1394.3,439.4 1395.8,441.6 1398.0,449.2 1400.0,439.7 1402.3,447.6 1405.5,436.1 1408.6,445.7 1410.5,446.3 1413.3,442.3 1414.9,439.6 1418.0,432.0 1419.8,436.8 1422.9,421.8 1425.6,421.4 1427.1,408.1 1429.2,411.2 1432.3,394.0 1435.2,394.2 1438.1,386.1 1441.0,371.8 1443.1,364.6 1446.1,360.1 1447.8,351.6 1449.6,352.7 1451.3,348.7 1453.0,343.2 1455.0,335.6 1456.9,338.7 1458.6,340.3 1460.1,341.1 1461.5,333.2 1463.9,340.3 1466.1,328.1 1467.7,329.1 1469.9,333.1 1472.8,333.3 1475.1,327.9 1478.3,331.7 1481.2,324.9 1483.7,328.4 1485.8,332.8 1487.4,331.8 1490.1,327.8 1491.8,329.6 1494.7,316.5 1497.3,324.2 1499.2,323.3 1501.4,324.3 1503.6,321.8 1506.7,309.7 1509.1,319.6 1512.3,317.3 1514.3,321.0 1516.4,313.0 1517.6,312.0 1519.6,580.0 1552.6,580.0 1552.6,580.0 1554.4,577.1 1555.8,578.5 1557.3,574.0 1558.8,577.4 1560.8,571.1 1563.2,562.7 1566.0,556.4 1568.6,548.8 1570.7,553.8 1573.9,551.5 1576.6,539.8 1578.1,534.5 1581.1,532.9 1583.8,525.8 1585.5,527.5 1587.8,519.2 1590.6,514.8 1593.1,509.9 1595.7,508.7 1597.5,515.8 1599.2,508.3 1600.8,498.6 1603.2,497.9 1605.7,493.1 1608.0,499.7 1610.8,484.0 1613.1,483.5 1615.7,486.5 1618.4,479.4 1620.0,476.7 1622.7,473.4 1625.4,457.4 1627.7,462.9 1630.0,457.9 1632.7,458.3 1635.3,465.9 1637.0,462.9 1639.7,461.6 1642.1,465.5 1643.6,461.4 1646.2,454.4 1648.9,460.0 1651.2,456.9 1653.4,461.7 1656.4,459.8 1659.6,448.1 1661.0,455.0 1663.9,446.7 1666.1,456.8 1667.9,446.3 1669.7,451.4 1671.3,451.9 1674.4,457.2 1677.3,451.0 1680.3,447.4 1682.1,444.1 1684.4,456.8 1685.8,449.5 1688.0,451.9 1689.7,451.0 1691.6,443.1 1693.0,444.1 1696.0,453.1 1699.0,443.5 1702.0,442.5 1704.1,434.7 1707.3,422.2 1709.4,418.5 1711.3,418.5 1712.8,402.0 1714.8,394.7 1716.6,399.3 1718.9,393.5 1721.0,375.7 1724.0,369.0 1726.5,359.8 1729.6,356.1 1732.3,357.4 1735.0,350.1 1737.8,346.0 1739.7,354.1 1742.8,351.6 1745.0,347.4 1747.0,340.5 1750.1,346.4 1752.7,344.6 1755.1,342.2 1756.8,344.9 1758.6,332.9 1760.9,342.3 1763.9,329.2 1766.1,341.2 1767.9,341.1 1769.9,340.3 1771.7,336.9 1774.1,326.4 1776.9,332.3 1779.0,329.7 1781.1,331.6 1782.6,331.8 1785.8,332.7 1788.1,324.1 1791.0,329.1 1792.9,327.8 1795.0,323.9 1797.6,321.9 1799.6,580.0 1832.6,580.0 1832.6,580.0 1835.5,569.3 1837.0,579.5 1839.6,561.8 1841.9,562.5 1843.3,563.0 1846.4,551.1 1849.3,543.8 1851.2,553.6 1852.8,544.5 1855.5,533.6 1858.2,533.3 1860.9,531.3 1863.3,533.5 1866.1,525.7 1869.2,514.1 1871.1,518.6 1873.0,507.7 1875.6,510.9 1877.2,502.1 1879.6,499.9 1881.4,493.5 1882.8,495.6 1885.1,481.8 1887.6,478.5 1889.9,484.3 1891.7,470.2 1894.4,475.4 1895.8,470.0 1898.5,466.6 1900.3,459.6 1903.4,461.0 1904.8,456.7 1907.0,447.8 1908.8,444.8 1911.5,448.8 1913.3,441.5 1915.2,443.5 1917.0,452.2 1919.8,450.7 1922.9,447.1 1924.7,451.0 1926.8,444.0 1929.9,451.3 1932.0,449.9 1935.2,450.5 1936.7,451.5 1938.8,438.5 1941.8,440.6 1945.0,437.1 1947.0,448.0 1950.0,439.0 1951.5,440.0 1953.6,444.1 1955.6,446.9 1957.0,445.0 1959.0,434.5 1960.6,434.1 1962.4,443.0 1965.3,435.5 1967.5,446.8 1969.7,441.5 1972.8,443.8 1974.8,432.8 1976.3,439.9 1979.1,434.1 1980.6,444.9 1982.1,426.6 1984.0,423.1 1987.0,419.3 1988.9,403.8 1991.4,406.1 1994.1,396.5 1996.0,395.0 1998.8,372.2 2001.3,363.4 2002.7,369.4 2005.0,351.1 2008.1,349.5 2010.0,342.8 2012.3,329.7 2014.0,330.8 2016.7,329.3 2019.5,331.3 2021.5,334.8 2023.5,326.9 2025.1,335.0 2027.8,333.1 2029.4,335.6 2031.8,330.2 2034.9,320.4 2038.1,328.3 2039.6,330.2 2041.9,319.9 2044.2,326.1 2046.3,319.3 2048.9,316.3 2051.8,316.2 2053.5,312.9 2055.4,316.2 2057.5,312.7 2059.2,319.3 2061.1,319.9 2064.0,312.2 2066.0,314.0 2069.2,311.0 2071.0,305.6 2073.6,301.7 2075.2,308.8 2077.6,307.4 2079.6,580.0 2112.6,580.0 2112.6,580.0 2115.5,569.5 2117.0,576.7 2118.6,575.9 2121.8,565.3 2124.8,564.0 2127.8,558.5 2129.7,550.8 2132.8,556.3 2135.2,544.9 2137.0,546.1 2138.7,546.2 2140.5,537.5 2143.1,539.6 2144.5,535.7 2147.1,534.0 2149.1,530.8 2151.9,521.5 2153.5,526.0 2155.6,516.1 2158.1,519.3 2159.8,507.7 2161.9,510.8 2163.9,497.8 2165.9,500.7 2167.9,500.0 2170.9,486.9 2172.9,495.9 2175.6,491.9 2177.0,479.3 2179.2,477.3 2181.3,473.2 2183.6,480.8 2185.0,472.9 2187.5,463.7 2189.1,467.7 2191.2,469.1 2192.8,472.1 2195.2,462.0 2196.8,468.2 2199.6,460.5 2201.4,472.9 2204.5,459.5 2206.7,473.0 2209.8,467.4 2212.8,463.3 2215.7,469.7 2218.5,468.2 2220.7,458.4 2223.6,467.9 2225.3,464.3 2227.7,464.1 2229.3,465.9 2232.0,455.6 2233.5,460.3 2236.2,467.7 2239.1,466.0 2241.6,459.0 2244.2,462.2 2246.3,457.6 2248.5,456.1 2250.7,459.0 2252.1,456.0 2254.4,461.4 2257.2,452.6 2259.4,461.3 2261.7,462.0 2263.3,456.8 2264.9,456.3 2267.2,456.3 2269.7,446.0 2272.4,425.2 2274.8,427.3 2277.1,413.7 2280.2,405.5 2283.1,381.4 2285.8,373.8 2287.6,364.7 2289.9,356.4 2292.9,361.2 2295.7,348.4 2297.3,356.5 2300.0,358.1 2303.0,355.1 2305.9,355.8 2308.2,343.1 2310.0,352.2 2312.3,350.3 2313.8,351.8 2315.4,339.6 2318.1,339.1 2319.8,340.0 2321.4,343.2 2323.9,344.6 2326.9,340.4 2329.3,334.3 2330.9,332.0 2333.5,339.9 2336.3,340.6 2339.5,334.5 2341.5,330.8 2343.7,338.7 2346.5,339.4 2349.3,335.0 2351.9,322.9 2354.3,326.7 2356.3,335.8 2357.6,327.7 2359.6,580.0 2392.6,580.0 2392.6,580.0 2394.3,575.8 2396.4,574.2 2399.5,575.5 2401.3,565.0 2402.7,572.6 2404.7,568.1 2406.8,563.3 2409.2,554.2 2411.0,551.1 2413.3,555.1 2416.3,549.0 2418.0,548.7 2420.6,533.3 2423.4,536.3 2425.2,539.4 2427.8,527.3 2429.8,523.1 2432.0,515.5 2434.8,521.8 2437.8,520.5 2440.1,511.6 2442.0,514.1 2444.8,510.7 2447.2,493.2 2448.8,501.9 2451.3,493.6 2453.9,485.2 2455.6,490.3 2457.5,491.4 2460.5,475.9 2463.2,483.7 2466.1,468.3 2468.4,466.0 2470.6,473.5 2472.2,473.2 2473.6,471.4 2476.4,465.5 2479.3,464.9 2481.2,467.0 2483.4,463.1 2485.7,470.6 2488.3,459.7 2490.1,460.7 2491.5,469.9 2493.3,462.3 2496.4,461.8 2498.4,459.5 2500.4,468.9 2503.4,462.5 2506.1,461.6 2509.2,464.1 2512.2,460.2 2515.1,463.7 2517.8,461.3 2519.8,466.4 2522.3,468.0 2525.3,466.6 2526.8,466.9 2529.8,462.9 2531.5,467.4 2533.0,457.2 2535.5,456.7 2538.2,465.8 2540.7,461.0 2543.6,453.7 2546.6,460.7 2549.5,435.7 2552.6,435.1 2554.4,427.7 2555.9,410.6 2558.7,402.0 2561.6,390.1 2563.5,390.2 2565.1,373.8 2566.9,373.1 2569.0,368.7 2570.9,357.1 2573.6,352.0 2575.6,342.2 2577.9,342.8 2580.4,354.1 2582.5,347.1 2585.3,347.2 2588.0,343.1 2589.8,337.4 2591.3,337.4 2593.1,349.0 2594.8,336.7 2598.0,346.8 2600.3,338.4 2603.1,341.8 2605.4,338.4 2608.3,338.4" fill="none" stroke="#2e840c" stroke-width="2.1" stroke-linejoin="round"/></svg>
<div class="b" style="left:944px;top:579px;width:12px;height:2px;background:#2e840c;"></div>
<div class="t" style="left:738.0px;top:570.5px;font-size:19.5px;color:#2b2b2b;font-weight:400;width:201px;text-align:right;transform:scaleX(1.1050);transform-origin:100% 50%;">0</div>
<div class="b" style="left:944px;top:521px;width:12px;height:2px;background:#2e840c;"></div>
<div class="t" style="left:738.0px;top:512.5px;font-size:19.5px;color:#2b2b2b;font-weight:400;width:201px;text-align:right;transform:scaleX(1.0828);transform-origin:100% 50%;">10</div>
<div class="b" style="left:944px;top:463px;width:12px;height:2px;background:#2e840c;"></div>
<div class="t" style="left:738.0px;top:454.5px;font-size:19.5px;color:#2b2b2b;font-weight:400;width:201px;text-align:right;transform:scaleX(1.1058);transform-origin:100% 50%;">20</div>
<div class="b" style="left:944px;top:405px;width:12px;height:2px;background:#2e840c;"></div>
<div class="t" style="left:738.0px;top:396.5px;font-size:19.5px;color:#2b2b2b;font-weight:400;width:201px;text-align:right;transform:scaleX(1.1058);transform-origin:100% 50%;">30</div>
<div class="b" style="left:944px;top:347px;width:12px;height:2px;background:#2e840c;"></div>
<div class="t" style="left:738.0px;top:338.5px;font-size:19.5px;color:#2b2b2b;font-weight:400;width:201px;text-align:right;transform:scaleX(1.1289);transform-origin:100% 50%;">40</div>
<svg class="s" style="left:0px;top:0px;pointer-events:none;" width="2700" height="1740" viewBox="0 0 2700 1740"><polyline points="958.0,659.7 958.0,932.0 993.0,932.0 993.0,659.7 1237.6,659.7 1237.6,932.0 1272.6,932.0 1272.6,659.7 1517.6,659.7 1517.6,932.0 1552.6,932.0 1552.6,659.7 1797.6,659.7 1797.6,932.0 1832.6,932.0 1832.6,659.7 2077.6,659.7 2077.6,932.0 2112.6,932.0 2112.6,659.7 2357.6,659.7 2357.6,932.0 2392.6,932.0 2392.6,659.7 2613.0,659.7" fill="none" stroke="#2e840c" stroke-width="2.2"/><path d="M956 659.7 V932" stroke="#5a9e40" stroke-width="1.6"/></svg>
<div class="b" style="left:944px;top:658.7px;width:12px;height:2px;background:#2e840c;"></div>
<div class="t" style="left:738.0px;top:650.2px;font-size:19.5px;color:#2b2b2b;font-weight:400;width:201px;text-align:right;transform:scaleX(0.9881);transform-origin:100% 50%;">ACTIVE</div>
<div class="b" style="left:944px;top:931px;width:12px;height:2px;background:#2e840c;"></div>
<div class="t" style="left:738.0px;top:922.5px;font-size:19.5px;color:#2b2b2b;font-weight:400;width:201px;text-align:right;transform:scaleX(1.0085);transform-origin:100% 50%;">INACTIVE</div>
<svg class="s" style="left:0px;top:0px;pointer-events:none;" width="2700" height="1740" viewBox="0 0 2700 1740"><polyline points="956.5,1010.3 956.5,1284.2 993.0,1284.2 992.6,1284.2 994.7,1278.9 997.6,1265.1 999.4,1256.6 1001.1,1248.3 1004.0,1236.1 1006.7,1227.0 1009.0,1216.9 1012.2,1205.1 1015.4,1191.8 1017.4,1182.0 1020.6,1166.9 1022.9,1154.9 1024.9,1148.8 1027.5,1138.1 1030.4,1139.2 1032.7,1143.2 1034.5,1136.4 1037.3,1137.5 1039.2,1141.3 1042.2,1139.2 1044.1,1140.6 1047.2,1143.3 1049.2,1142.3 1052.1,1135.1 1053.9,1139.1 1056.0,1134.4 1058.5,1130.8 1060.7,1126.7 1064.1,1117.5 1065.9,1112.9 1067.6,1113.1 1071.0,1104.6 1073.9,1101.5 1075.9,1096.7 1077.7,1096.0 1080.0,1092.9 1082.3,1084.3 1085.1,1080.9 1087.9,1076.2 1089.7,1072.0 1092.1,1067.0 1095.3,1063.0 1097.9,1056.4 1100.3,1055.2 1103.2,1046.2 1106.2,1041.8 1109.3,1036.3 1112.1,1032.7 1114.2,1027.7 1116.0,1025.8 1119.0,1018.6 1121.7,1016.4 1124.1,1012.2 1126.8,1013.1 1129.6,1006.5 1131.6,1010.2 1134.6,1013.9 1137.1,1006.5 1138.7,1012.3 1140.6,1009.3 1143.9,1013.0 1145.7,1012.4 1148.3,1010.8 1150.8,1012.0 1153.9,1013.7 1156.2,1008.4 1158.2,1012.0 1160.5,1011.1 1162.3,1008.4 1164.6,1020.6 1166.7,1019.0 1168.3,1021.7 1170.6,1024.1 1172.9,1030.5 1174.9,1031.2 1178.2,1038.1 1180.2,1039.9 1182.5,1047.3 1184.3,1047.2 1187.4,1053.3 1189.8,1057.9 1191.8,1059.1 1194.0,1064.8 1197.1,1073.1 1199.6,1099.3 1202.1,1124.8 1205.2,1152.9 1208.4,1183.1 1210.7,1204.7 1213.0,1227.6 1214.6,1239.5 1216.7,1246.7 1218.9,1249.9 1221.2,1253.9 1224.0,1261.4 1227.3,1265.4 1229.0,1269.2 1232.2,1276.0 1234.1,1279.3 1236.8,1284.2 1238.5,1281.6 1235.6,1284.2 1272.6,1284.2 1272.6,1284.2 1274.7,1279.8 1276.5,1271.8 1279.5,1259.4 1281.4,1248.8 1284.4,1241.3 1287.6,1226.2 1290.6,1214.0 1293.8,1200.8 1296.9,1192.1 1299.8,1179.0 1302.7,1168.0 1305.9,1154.9 1308.0,1155.8 1309.8,1152.3 1311.5,1152.5 1313.4,1152.1 1315.9,1151.2 1319.0,1157.9 1322.2,1151.7 1324.8,1148.9 1327.9,1152.5 1330.2,1144.7 1332.0,1148.8 1334.7,1149.8 1337.4,1141.5 1340.7,1138.2 1344.1,1131.6 1346.5,1125.3 1348.2,1123.6 1350.9,1121.3 1354.1,1116.0 1356.5,1111.0 1359.5,1107.9 1361.9,1102.8 1364.5,1096.1 1366.6,1092.6 1368.9,1090.7 1371.0,1087.2 1374.4,1080.8 1377.4,1077.8 1379.6,1074.4 1382.2,1068.0 1385.3,1066.6 1388.2,1056.8 1390.7,1057.5 1392.9,1054.2 1394.8,1045.7 1397.5,1042.8 1400.5,1036.3 1403.2,1033.6 1406.0,1031.3 1408.6,1031.7 1410.6,1032.1 1413.0,1031.0 1414.8,1038.7 1416.5,1031.1 1419.7,1032.9 1422.0,1031.0 1425.0,1034.6 1427.1,1038.1 1429.4,1038.1 1431.8,1034.1 1435.1,1042.0 1437.7,1042.4 1439.5,1032.5 1442.2,1031.3 1444.6,1043.2 1446.9,1040.3 1450.2,1043.7 1452.6,1051.3 1454.4,1053.0 1456.4,1059.3 1458.0,1062.9 1460.8,1067.1 1464.2,1073.1 1467.3,1078.3 1469.0,1077.7 1471.0,1081.1 1472.9,1088.4 1475.9,1089.7 1479.1,1111.2 1480.8,1126.3 1483.7,1151.0 1487.0,1179.3 1490.3,1204.1 1491.9,1221.6 1494.7,1239.1 1496.5,1245.7 1499.4,1252.7 1502.5,1257.5 1504.2,1261.8 1506.9,1266.9 1509.7,1274.6 1512.7,1279.4 1515.5,1283.2 1517.8,1284.2 1515.6,1284.2 1552.6,1284.2 1552.6,1284.2 1555.9,1271.4 1558.5,1265.0 1560.2,1255.0 1563.1,1245.6 1565.3,1239.1 1568.7,1225.9 1571.3,1219.4 1573.7,1207.6 1576.0,1200.7 1578.7,1190.0 1581.7,1182.7 1583.3,1177.1 1585.7,1166.9 1588.8,1158.9 1590.4,1159.5 1593.5,1158.9 1596.1,1166.4 1599.3,1159.2 1602.1,1157.6 1604.3,1168.2 1606.9,1158.8 1608.9,1159.2 1612.1,1165.7 1614.8,1157.4 1617.3,1156.0 1619.3,1149.3 1622.4,1145.9 1624.1,1140.9 1627.1,1139.2 1629.7,1130.9 1632.9,1127.7 1635.4,1123.1 1637.3,1122.1 1639.3,1115.9 1641.5,1112.9 1643.8,1109.3 1645.7,1108.9 1649.1,1101.2 1650.9,1096.7 1653.9,1094.3 1656.6,1088.7 1659.1,1086.3 1660.8,1077.8 1663.9,1075.4 1666.6,1072.3 1669.6,1066.3 1672.9,1058.7 1675.9,1052.4 1678.0,1054.3 1680.0,1050.1 1681.7,1047.9 1684.3,1037.4 1686.7,1036.6 1690.0,1048.3 1692.7,1044.2 1694.5,1037.0 1696.5,1042.3 1699.3,1037.4 1702.1,1045.0 1704.5,1048.2 1707.8,1037.7 1709.8,1050.2 1711.9,1046.3 1715.1,1039.4 1718.2,1050.7 1721.2,1042.4 1724.0,1039.0 1725.7,1049.4 1728.7,1049.8 1731.5,1058.4 1734.2,1060.3 1735.9,1065.9 1738.0,1070.7 1740.5,1074.7 1742.5,1078.3 1745.3,1083.9 1748.2,1087.9 1749.9,1086.4 1751.9,1089.8 1755.0,1095.6 1756.9,1103.1 1758.7,1114.1 1761.8,1140.1 1764.2,1160.6 1767.3,1183.8 1770.0,1207.0 1772.0,1223.1 1774.9,1241.0 1776.7,1243.1 1778.8,1250.1 1780.7,1254.9 1783.8,1261.1 1785.7,1264.2 1787.9,1266.4 1789.7,1269.8 1791.4,1273.7 1794.2,1283.2 1796.7,1284.2 1798.7,1284.2 1795.6,1284.2 1832.6,1284.2 1832.6,1284.2 1836.0,1269.5 1839.2,1262.2 1841.4,1249.4 1843.1,1243.9 1845.2,1234.3 1846.8,1229.0 1849.0,1224.4 1850.6,1214.3 1853.2,1208.3 1855.6,1194.9 1857.6,1189.2 1859.4,1184.4 1862.4,1169.9 1864.4,1166.1 1866.1,1156.3 1868.6,1157.8 1870.6,1153.3 1873.5,1150.5 1876.1,1158.2 1877.8,1151.2 1880.2,1151.2 1881.9,1149.9 1884.1,1149.3 1887.2,1153.6 1888.8,1148.1 1891.3,1148.4 1893.4,1153.6 1896.5,1147.2 1898.4,1143.9 1901.0,1141.5 1903.6,1134.6 1906.1,1132.1 1909.0,1123.1 1912.2,1120.5 1915.0,1115.2 1918.0,1112.0 1921.2,1101.4 1923.6,1099.7 1926.2,1095.1 1927.8,1089.8 1929.8,1091.0 1931.6,1087.5 1934.7,1083.5 1936.5,1076.6 1938.4,1077.2 1941.1,1069.3 1943.6,1064.2 1945.4,1060.2 1948.3,1060.0 1950.1,1054.3 1952.6,1051.2 1954.5,1047.3 1956.3,1043.1 1959.5,1040.3 1962.1,1032.2 1964.0,1026.9 1967.3,1032.8 1969.6,1027.2 1972.2,1033.1 1975.5,1028.4 1977.7,1035.6 1979.9,1033.2 1983.2,1028.7 1986.5,1028.8 1989.6,1038.9 1992.1,1027.4 1995.4,1036.9 1997.8,1032.1 2000.0,1033.6 2001.8,1035.0 2004.3,1040.5 2006.1,1034.2 2009.1,1039.6 2011.9,1045.1 2015.1,1050.1 2016.7,1054.4 2018.8,1057.8 2020.9,1062.2 2024.2,1067.3 2026.2,1071.5 2028.6,1073.1 2030.7,1080.5 2033.5,1086.3 2036.1,1086.0 2038.7,1108.2 2041.1,1127.1 2043.0,1145.2 2044.8,1159.7 2047.1,1179.3 2049.2,1197.6 2051.8,1214.9 2054.5,1239.1 2057.2,1248.0 2060.1,1252.6 2062.7,1257.1 2065.1,1264.1 2067.2,1268.9 2069.7,1273.2 2072.4,1280.7 2074.6,1280.1 2076.6,1283.9 2079.1,1284.2 2075.6,1284.2 2112.6,1284.2 2112.6,1284.2 2114.7,1275.6 2116.6,1272.2 2119.8,1257.3 2121.5,1250.8 2123.9,1239.2 2125.7,1235.0 2129.0,1218.7 2130.9,1213.6 2133.1,1202.7 2135.8,1190.8 2138.9,1180.5 2141.8,1167.4 2144.8,1157.2 2147.8,1147.1 2151.1,1154.4 2154.2,1155.7 2157.2,1147.9 2159.7,1142.9 2162.3,1149.7 2165.4,1143.6 2168.0,1149.8 2170.5,1148.6 2173.4,1147.8 2175.7,1142.5 2178.0,1140.0 2181.0,1131.9 2183.5,1130.1 2185.4,1127.6 2187.3,1122.9 2189.9,1121.4 2193.2,1114.5 2196.3,1106.3 2199.6,1104.5 2202.0,1096.4 2203.6,1098.7 2206.2,1091.7 2209.5,1084.6 2212.0,1079.0 2214.6,1077.6 2217.4,1073.6 2219.6,1068.7 2221.9,1062.9 2224.7,1060.6 2226.5,1058.5 2228.8,1053.5 2231.4,1047.3 2234.8,1044.0 2237.2,1039.2 2240.6,1035.2 2243.1,1028.1 2245.0,1031.6 2248.4,1025.3 2250.9,1034.8 2254.1,1027.5 2257.2,1023.9 2260.4,1031.5 2262.3,1033.3 2264.8,1030.8 2266.7,1035.1 2269.5,1029.9 2271.7,1025.0 2274.4,1037.5 2276.8,1028.0 2278.9,1029.5 2280.5,1034.6 2283.7,1031.2 2286.5,1037.4 2289.0,1039.6 2291.0,1042.6 2293.6,1045.0 2296.2,1052.9 2298.0,1057.6 2301.0,1063.0 2302.8,1065.7 2305.3,1066.2 2308.0,1071.0 2309.7,1078.6 2312.7,1081.9 2315.6,1086.7 2317.5,1096.8 2319.3,1108.2 2322.0,1134.0 2324.4,1154.3 2326.1,1165.8 2328.7,1187.9 2331.1,1210.2 2333.2,1231.0 2336.4,1242.5 2338.6,1246.8 2341.7,1256.8 2344.3,1258.6 2346.8,1263.9 2348.9,1271.5 2351.8,1278.4 2353.9,1278.7 2356.4,1282.5 2358.4,1284.2 2355.6,1284.2 2392.6,1284.2 2392.6,1284.2 2394.5,1277.9 2397.9,1264.9 2400.5,1254.9 2403.1,1242.4 2405.4,1234.3 2407.2,1222.1 2409.4,1216.0 2411.4,1207.5 2413.4,1200.3 2416.2,1186.6 2418.1,1176.5 2419.9,1171.5 2423.0,1159.1 2425.4,1144.8 2428.4,1145.7 2430.6,1138.2 2432.9,1135.0 2434.9,1134.9 2437.4,1144.2 2439.8,1145.2 2442.7,1143.3 2445.9,1138.8 2448.2,1143.1 2450.9,1143.3 2454.0,1139.1 2456.6,1132.2 2458.6,1127.1 2460.9,1123.7 2463.6,1121.1 2465.9,1118.3 2467.8,1110.4 2470.0,1107.6 2471.7,1105.0 2474.0,1101.3 2476.1,1100.1 2478.3,1095.3 2480.1,1089.2 2482.2,1087.2 2485.5,1079.3 2488.7,1073.1 2490.5,1073.2 2492.1,1067.9 2494.9,1064.9 2497.3,1058.9 2500.1,1056.2 2503.3,1050.0 2506.0,1046.2 2507.8,1038.7 2510.7,1034.6 2512.4,1035.6 2514.3,1031.3 2516.4,1026.4 2518.1,1023.8 2520.9,1019.7 2524.0,1012.0 2526.9,1016.4 2529.2,1011.0 2531.5,1020.0 2534.6,1010.2 2536.7,1019.9 2539.8,1012.8 2541.5,1017.7 2543.3,1010.7 2545.3,1009.3 2548.2,1020.2 2551.1,1016.5 2554.0,1011.1 2556.1,1020.8 2559.4,1016.7 2562.7,1013.5 2565.6,1016.0 2568.4,1022.9 2570.1,1024.4 2572.4,1029.6 2575.7,1037.5 2578.7,1043.1 2581.6,1043.6 2583.6,1048.7 2587.0,1053.9 2589.5,1060.6 2591.3,1062.9 2593.6,1067.9 2595.8,1072.0 2598.6,1089.4 2600.7,1111.0 2603.2,1133.6 2606.5,1165.0 2608.6,1182.0 2610.5,1201.4 2612.7,1220.6 2613.5,1219.3" fill="none" stroke="#2e840c" stroke-width="2.1" stroke-linejoin="round"/></svg>
<div class="b" style="left:944px;top:1283.2px;width:12px;height:2px;background:#2e840c;"></div>
<div class="t" style="left:738.0px;top:1274.7px;font-size:19.5px;color:#2b2b2b;font-weight:400;width:201px;text-align:right;transform:scaleX(1.1050);transform-origin:100% 50%;">0</div>
<div class="b" style="left:944px;top:1218.3px;width:12px;height:2px;background:#2e840c;"></div>
<div class="t" style="left:738.0px;top:1209.8px;font-size:19.5px;color:#2b2b2b;font-weight:400;width:201px;text-align:right;transform:scaleX(1.0828);transform-origin:100% 50%;">10</div>
<div class="b" style="left:944px;top:1153.4px;width:12px;height:2px;background:#2e840c;"></div>
<div class="t" style="left:738.0px;top:1144.9px;font-size:19.5px;color:#2b2b2b;font-weight:400;width:201px;text-align:right;transform:scaleX(1.1058);transform-origin:100% 50%;">20</div>
<div class="b" style="left:944px;top:1088.5px;width:12px;height:2px;background:#2e840c;"></div>
<div class="t" style="left:738.0px;top:1080.0px;font-size:19.5px;color:#2b2b2b;font-weight:400;width:201px;text-align:right;transform:scaleX(1.1058);transform-origin:100% 50%;">30</div>
<div class="b" style="left:944px;top:1009.322px;width:12px;height:2px;background:#2e840c;"></div>
<div class="t" style="left:738.0px;top:1000.8px;font-size:19.5px;color:#2b2b2b;font-weight:400;width:201px;text-align:right;transform:scaleX(1.0539);transform-origin:100% 50%;">42.2</div>
<div class="b" style="left:955px;top:1291px;width:1659.5px;height:2.2px;background:#1e1e1e;"></div>
<div class="b" style="left:955px;top:1291px;width:2.5px;height:9px;background:#1e1e1e;"></div>
<div class="b" style="left:2611.5px;top:1291px;width:2.5px;height:9px;background:#1e1e1e;"></div>
<div class="b" style="left:999.4px;top:1291px;width:2.5px;height:9px;background:#1e1e1e;"></div>
<div class="t" style="left:940.6px;top:1303.6px;font-size:20px;color:#2b2b2b;font-weight:400;width:120px;text-align:center;transform:scaleX(1.0187);transform-origin:50% 50%;">14:00</div>
<div class="b" style="left:1206.7px;top:1291px;width:2.5px;height:9px;background:#1e1e1e;"></div>
<div class="t" style="left:1147.9px;top:1303.6px;font-size:20px;color:#2b2b2b;font-weight:400;width:120px;text-align:center;transform:scaleX(1.0187);transform-origin:50% 50%;">15:00</div>
<div class="b" style="left:1414.0px;top:1291px;width:2.5px;height:9px;background:#1e1e1e;"></div>
<div class="t" style="left:1355.2px;top:1303.6px;font-size:20px;color:#2b2b2b;font-weight:400;width:120px;text-align:center;transform:scaleX(1.0187);transform-origin:50% 50%;">16:00</div>
<div class="b" style="left:1621.3px;top:1291px;width:2.5px;height:9px;background:#1e1e1e;"></div>
<div class="t" style="left:1562.5px;top:1303.6px;font-size:20px;color:#2b2b2b;font-weight:400;width:120px;text-align:center;transform:scaleX(1.0187);transform-origin:50% 50%;">17:00</div>
<div class="b" style="left:1828.6000000000001px;top:1291px;width:2.5px;height:9px;background:#1e1e1e;"></div>
<div class="t" style="left:1769.8px;top:1303.6px;font-size:20px;color:#2b2b2b;font-weight:400;width:120px;text-align:center;transform:scaleX(1.0187);transform-origin:50% 50%;">18:00</div>
<div class="b" style="left:2035.8999999999999px;top:1291px;width:2.5px;height:9px;background:#1e1e1e;"></div>
<div class="t" style="left:1977.1px;top:1303.6px;font-size:20px;color:#2b2b2b;font-weight:400;width:120px;text-align:center;transform:scaleX(1.0187);transform-origin:50% 50%;">19:00</div>
<div class="b" style="left:2243.2000000000003px;top:1291px;width:2.5px;height:9px;background:#1e1e1e;"></div>
<div class="t" style="left:2184.4px;top:1303.6px;font-size:20px;color:#2b2b2b;font-weight:400;width:120px;text-align:center;transform:scaleX(1.0187);transform-origin:50% 50%;">20:00</div>
<div class="b" style="left:2450.5000000000005px;top:1291px;width:2.5px;height:9px;background:#1e1e1e;"></div>
<div class="t" style="left:2391.7px;top:1303.6px;font-size:20px;color:#2b2b2b;font-weight:400;width:120px;text-align:center;transform:scaleX(1.0187);transform-origin:50% 50%;">21:00</div>
<div class="b" style="left:956px;top:241.5px;width:179px;height:48.5px;background:#fff;border:1.5px solid #dadada;border-radius:5px;"></div>
<div class="b" style="left:964px;top:255.5px;width:20px;height:20px;background:#2e840c;border-radius:50%;"></div>
<div class="t" style="left:992.0px;top:254.5px;font-size:21px;color:#2b2b2b;font-weight:400;transform:scaleX(0.9275);transform-origin:0 50%;">BA:CONC.3</div>
<svg class="s" style="left:1105px;top:254.7px;" width="22" height="22" viewBox="0 0 22 22"><g stroke="#222" stroke-width="2.2" fill="none"><path d="M11 3 V19 M3 11 H19"/></g>
<path d="M11 0 L15 5 H7Z M11 22 L15 17 H7Z M0 11 L5 7 V15Z M22 11 L17 7 V15Z" fill="#222"/></svg>
<div class="b" style="left:956px;top:595.5px;width:191px;height:48.5px;background:#fff;border:1.5px solid #dadada;border-radius:5px;"></div>
<div class="b" style="left:964px;top:609.5px;width:20px;height:20px;background:#2e840c;border-radius:50%;"></div>
<div class="t" style="left:992.0px;top:608.5px;font-size:21px;color:#2b2b2b;font-weight:400;transform:scaleX(0.9157);transform-origin:0 50%;">BA:ACTIVE.1</div>
<svg class="s" style="left:1117px;top:608.7px;" width="22" height="22" viewBox="0 0 22 22"><g stroke="#222" stroke-width="2.2" fill="none"><path d="M11 3 V19 M3 11 H19"/></g>
<path d="M11 0 L15 5 H7Z M11 22 L15 17 H7Z M0 11 L5 7 V15Z M22 11 L17 7 V15Z" fill="#222"/></svg>
<div class="b" style="left:956px;top:947.5px;width:179px;height:48.5px;background:#fff;border:1.5px solid #dadada;border-radius:5px;"></div>
<div class="b" style="left:964px;top:961.5px;width:20px;height:20px;background:#2e840c;border-radius:50%;"></div>
<div class="t" style="left:992.0px;top:960.5px;font-size:21px;color:#2b2b2b;font-weight:400;transform:scaleX(0.8994);transform-origin:0 50%;">BA:LEVEL.2</div>
<svg class="s" style="left:1105px;top:960.7px;" width="22" height="22" viewBox="0 0 22 22"><g stroke="#222" stroke-width="2.2" fill="none"><path d="M11 3 V19 M3 11 H19"/></g>
<path d="M11 0 L15 5 H7Z M11 22 L15 17 H7Z M0 11 L5 7 V15Z M22 11 L17 7 V15Z" fill="#222"/></svg>
<div class="b" style="left:956.5px;top:1340.5px;width:63px;height:63px;background:#fff;border:2px solid #dcdcdc;border-radius:6px;"></div>
<svg class="s" style="left:984px;top:1365.5px;" width="8" height="13" viewBox="0 0 8 13"><path d="M7.3 0 V13 L0 6.5Z" fill="#555"/></svg>
<div class="b" style="left:1028.5px;top:1340.5px;width:251px;height:63px;background:#fff;border:2px solid #dcdcdc;border-radius:6px;"></div>
<div class="t" style="left:1054.0px;top:1360.1px;font-size:27px;color:#1f2328;font-weight:400;transform:scaleX(1.1470);transform-origin:0 50%;">31/01/2024</div>
<svg class="s" style="left:1233.5px;top:1356.5px;" width="28" height="29" viewBox="0 0 28 29"><rect x="1" y="4" width="26" height="24" rx="1.5" fill="none" stroke="#9a9a9a" stroke-width="2"/><path d="M1 9.5 H27" stroke="#9a9a9a" stroke-width="2"/><path d="M7 0.5 V5 M21 0.5 V5" stroke="#9a9a9a" stroke-width="2.5"/><rect x="17" y="17" width="6.5" height="6.5" fill="#9a9a9a"/></svg>
<div class="b" style="left:1288.5px;top:1340.5px;width:278.5px;height:63px;background:#fff;border:2px solid #dcdcdc;border-radius:6px;"></div>
<div class="t" style="left:1315.0px;top:1360.1px;font-size:27px;color:#1f2328;font-weight:400;transform:scaleX(1.0465);transform-origin:0 50%;">13:46:59</div>
<svg class="s" style="left:1520.5px;top:1357px;" width="30" height="30" viewBox="0 0 30 30"><circle cx="15" cy="15" r="13.2" fill="none" stroke="#9a9a9a" stroke-width="2"/><path d="M15 7 V16 H22" fill="none" stroke="#9a9a9a" stroke-width="2"/></svg>
<div class="b" style="left:1610.5px;top:1340.5px;width:63px;height:63px;background:#fff;border:2px solid #dcdcdc;border-radius:6px;"></div>
<svg class="s" style="left:1625px;top:1355px;" width="34" height="34" viewBox="0 0 34 34"><path d="M1.5 0 V31.5 H32.5" fill="none" stroke="#555" stroke-width="1.6"/><path d="M4 30 H9 V25 H14 V20 H19 V15 H27" fill="none" stroke="#555" stroke-width="1.6"/><path d="M4 17 Q8 9 16 8 Q22 7.5 26 3" fill="none" stroke="#555" stroke-width="2.8" stroke-linecap="round"/></svg>
<div class="b" style="left:1683px;top:1340.5px;width:204px;height:63px;background:#fff;border:2px solid #dcdcdc;border-radius:6px;"></div>
<div class="b" style="left:1824.5px;top:1341.5px;width:1.5px;height:61px;background:#dcdcdc;"></div>
<div class="t" style="left:1707.5px;top:1360.1px;font-size:27px;color:#1f2328;font-weight:400;transform:scaleX(1.0326);transform-origin:0 50%;">8 hours</div>
<svg class="s" style="left:1844px;top:1356px;" width="24" height="30" viewBox="0 0 24 30"><path d="M5.5 13 V8.5 A6.5 6.5 0 0 1 18.5 8.5 V9.5" fill="none" stroke="#444" stroke-width="2.6"/><rect x="2" y="13" width="20.5" height="15.5" rx="2" fill="none" stroke="#444" stroke-width="2.6"/><circle cx="12.2" cy="20.8" r="2.2" fill="#444"/></svg>
<div class="b" style="left:1896.5px;top:1340.5px;width:63px;height:63px;background:#fff;border:2px solid #f0f0f0;border-radius:6px;"></div>
<svg class="s" style="left:1913px;top:1357px;" width="30" height="30" viewBox="0 0 30 30"><path d="M6.5 14 A10.5 10.5 0 1 1 9.5 22.5" fill="none" stroke="#cfcfcf" stroke-width="3"/><path d="M1.5 13 L6.5 18.5 L11.5 13Z" fill="#cfcfcf"/><path d="M17 9.5 V16 H22" fill="none" stroke="#cfcfcf" stroke-width="2.8"/></svg>
<div class="b" style="left:2002.5px;top:1340.5px;width:251px;height:63px;background:#fff;border:2px solid #dcdcdc;border-radius:6px;"></div>
<div class="t" style="left:2028.5px;top:1360.1px;font-size:27px;color:#1f2328;font-weight:400;transform:scaleX(1.1470);transform-origin:0 50%;">31/01/2024</div>
<svg class="s" style="left:2207.5px;top:1356.5px;" width="28" height="29" viewBox="0 0 28 29"><rect x="1" y="4" width="26" height="24" rx="1.5" fill="none" stroke="#9a9a9a" stroke-width="2"/><path d="M1 9.5 H27" stroke="#9a9a9a" stroke-width="2"/><path d="M7 0.5 V5 M21 0.5 V5" stroke="#9a9a9a" stroke-width="2.5"/><rect x="17" y="17" width="6.5" height="6.5" fill="#9a9a9a"/></svg>
<div class="b" style="left:2262.5px;top:1340.5px;width:279px;height:63px;background:#fff;border:2px solid #dcdcdc;border-radius:6px;"></div>
<div class="t" style="left:2288.0px;top:1360.1px;font-size:27px;color:#1f2328;font-weight:400;transform:scaleX(1.0560);transform-origin:0 50%;">21:46:59</div>
<svg class="s" style="left:2494.5px;top:1357px;" width="30" height="30" viewBox="0 0 30 30"><circle cx="15" cy="15" r="13.2" fill="none" stroke="#9a9a9a" stroke-width="2"/><path d="M15 7 V16 H22" fill="none" stroke="#9a9a9a" stroke-width="2"/></svg>
<div class="b" style="left:2550.5px;top:1340.5px;width:63px;height:63px;background:#fff;border:2px solid #dcdcdc;border-radius:6px;"></div>
<svg class="s" style="left:2579px;top:1365.5px;" width="8" height="13" viewBox="0 0 8 13"><path d="M0 0 V13 L7.3 6.5Z" fill="#555"/></svg>
<div class="b" style="left:956px;top:1420px;width:1657px;height:61px;background:#fff;"></div>
<svg class="s" style="left:0px;top:0px;" width="2700" height="1740" viewBox="0 0 2700 1740"><polyline points="957.0,1423.9 960.1,1475.2 962.9,1424.0 966.1,1477.4 969.0,1424.4 972.9,1477.7 975.2,1422.8 979.1,1475.9 980.4,1425.4 984.9,1476.0 988.2,1423.0 989.5,1476.4 990.9,1423.1 992.9,1477.9 995.7,1423.8 999.7,1476.4 1003.1,1424.0 1006.6,1476.6 1008.7,1425.5 1013.3,1475.5 1016.9,1423.4 1018.9,1477.1 1020.3,1424.8 1022.9,1475.5 1025.4,1425.4 1029.5,1478.0 1031.4,1425.2 1034.2,1475.1 1036.7,1422.7 1040.1,1475.7 1042.2,1422.8 1044.5,1475.1 1048.3,1422.9 1050.3,1477.7 1051.7,1424.9 1053.6,1476.3 1056.3,1423.1 1060.0,1477.6 1063.4,1422.8 1066.0,1477.4 1068.1,1425.4 1072.0,1477.1 1076.2,1423.1 1078.8,1475.4 1082.2,1422.8 1086.7,1477.4 1088.8,1424.8 1091.1,1477.1 1092.6,1422.8 1095.8,1477.3 1099.0,1423.6 1101.7,1475.1 1104.6,1424.2 1108.7,1477.5 1110.5,1425.2 1114.4,1477.3 1116.3,1424.7 1120.7,1477.4 1125.1,1425.1 1128.4,1476.7 1129.9,1422.6 1134.4,1477.3 1138.0,1423.3 1142.0,1476.2 1144.2,1423.0 1147.8,1477.8 1149.8,1424.2 1153.9,1476.2 1156.1,1425.3 1158.0,1478.0 1160.1,1423.8 1161.5,1477.5 1163.9,1424.2 1165.6,1476.9 1169.8,1425.4 1173.2,1475.9 1176.4,1422.9 1177.7,1477.9 1182.0,1424.6 1186.5,1477.9 1189.9,1423.9 1193.6,1477.0 1198.2,1422.7 1201.2,1475.8 1205.5,1424.7 1209.1,1475.6 1213.4,1423.6 1216.9,1475.3 1221.1,1423.8 1225.0,1475.4 1228.1,1424.4 1230.6,1476.3 1233.9,1422.7 1237.2,1475.0 1241.4,1424.7 1244.0,1475.8 1247.1,1423.8 1251.2,1477.7 1254.9,1422.6 1258.2,1476.6 1260.2,1424.6 1263.1,1476.2 1267.4,1423.3 1268.6,1477.1 1272.1,1423.1 1273.9,1475.3 1277.3,1423.8 1281.6,1477.0 1285.0,1423.1 1287.7,1475.6 1292.0,1425.1 1294.5,1476.3 1296.8,1422.9 1299.7,1475.5 1303.8,1424.6 1308.2,1477.2 1310.0,1423.9 1312.1,1477.4 1314.7,1424.4 1317.6,1477.1 1321.7,1425.4 1324.4,1477.8 1325.7,1425.1 1327.0,1475.9 1330.2,1423.4 1334.1,1477.9 1335.7,1423.9 1337.0,1475.5 1339.0,1422.9 1340.4,1476.1 1343.1,1424.4 1346.5,1475.6 1351.0,1424.6 1352.9,1476.6 1354.7,1422.5 1357.5,1475.9 1359.3,1423.3 1361.7,1475.9 1364.6,1424.3 1368.4,1476.8 1372.3,1425.2 1373.8,1475.2 1377.4,1422.9 1380.2,1476.1 1384.5,1423.6 1387.6,1475.4 1391.5,1425.3 1394.3,1476.0 1396.2,1424.7 1400.2,1476.1 1403.8,1423.1 1408.1,1475.1 1412.6,1424.1 1416.5,1477.0 1420.8,1425.1 1423.2,1477.8 1425.9,1424.2 1429.7,1476.5 1431.0,1424.9 1432.4,1475.6 1434.2,1423.5 1438.1,1477.6 1439.8,1424.0 1443.4,1475.5 1447.0,1425.3 1449.8,1475.2 1451.3,1423.2 1454.3,1477.1 1458.0,1424.4 1461.0,1475.5 1464.1,1423.4 1466.6,1475.5 1470.8,1423.1 1474.9,1475.1 1477.9,1424.2 1479.8,1476.4 1482.7,1424.3 1484.0,1475.1 1487.0,1423.7 1490.9,1476.3 1493.8,1424.6 1495.2,1476.4 1497.8,1425.4 1502.1,1477.2 1504.9,1422.9 1507.6,1475.6 1511.9,1423.9 1514.2,1477.4 1517.5,1425.3 1519.1,1475.7 1520.4,1423.1 1522.3,1475.9 1524.6,1423.6 1527.9,1477.7 1531.6,1422.9 1534.6,1477.2 1536.4,1424.1 1539.1,1476.9 1541.7,1424.1 1543.5,1477.4 1546.8,1424.4 1549.8,1475.4 1553.1,1425.1 1555.1,1475.8 1559.0,1425.2 1561.3,1477.1 1565.7,1423.2 1570.3,1475.3 1571.9,1423.2 1575.6,1477.2 1577.1,1425.0 1579.7,1475.6 1581.4,1423.7 1584.9,1477.9 1586.8,1424.5 1591.1,1475.1 1592.7,1424.0 1596.5,1476.5 1600.0,1423.1 1601.4,1477.7 1602.8,1424.2 1605.7,1476.3 1607.4,1423.1 1609.3,1475.5 1613.9,1425.3 1615.4,1477.8 1619.8,1423.9 1623.6,1477.0 1626.4,1424.0 1629.1,1476.2 1630.3,1424.6 1634.4,1477.5 1637.1,1424.7 1639.7,1477.4 1641.5,1424.0 1642.7,1475.3 1646.6,1424.6 1650.8,1476.1 1653.3,1424.3 1656.3,1475.1 1660.2,1423.3 1664.5,1475.8 1668.3,1424.9 1670.9,1475.3 1675.1,1424.6 1678.9,1475.7 1681.5,1424.7 1682.9,1477.0 1685.7,1422.5 1688.1,1476.1 1691.5,1423.2 1695.9,1476.0 1698.2,1424.5 1701.4,1476.4 1703.9,1425.5 1707.3,1475.9 1711.1,1425.4 1712.3,1476.2 1716.1,1423.3 1718.6,1477.8 1720.5,1423.6 1722.0,1477.2 1726.3,1424.2 1729.2,1475.1 1732.4,1425.5 1735.7,1475.6 1737.2,1424.3 1741.0,1477.9 1745.3,1423.0 1748.1,1477.5 1751.0,1424.3 1752.4,1475.2 1755.0,1424.1 1758.3,1476.9 1760.4,1424.5 1763.6,1477.1 1767.2,1423.4 1768.4,1477.3 1769.8,1423.0 1773.5,1476.8 1777.8,1424.7 1779.2,1475.0 1783.6,1422.7 1787.9,1476.7 1790.7,1425.4 1792.7,1476.4 1797.1,1424.7 1799.9,1475.1 1803.9,1424.3 1805.5,1476.1 1808.2,1423.1 1809.6,1476.4 1811.2,1423.8 1814.7,1476.6 1816.8,1424.2 1819.4,1475.7 1822.4,1425.5 1826.8,1475.8 1828.9,1422.8 1833.1,1475.6 1836.4,1423.6 1838.5,1475.9 1841.7,1424.3 1845.0,1475.7 1846.9,1423.2 1851.4,1475.3 1855.6,1422.6 1857.0,1477.2 1859.6,1424.4 1861.2,1476.4 1862.6,1422.8 1866.1,1476.3 1869.5,1423.6 1872.3,1477.4 1874.7,1424.7 1878.7,1477.8 1880.3,1424.9 1883.6,1475.7 1885.6,1423.8 1887.6,1475.6 1890.1,1424.5 1894.7,1477.0 1897.7,1424.7 1902.1,1476.7 1904.5,1422.8 1908.7,1477.8 1910.2,1424.2 1913.0,1475.9 1915.2,1424.8 1916.7,1477.4 1920.1,1422.7 1922.4,1475.8 1925.9,1423.3 1927.6,1476.9 1931.3,1423.6 1932.9,1475.9 1936.0,1425.3 1940.4,1475.3 1943.1,1424.9 1945.3,1477.0 1947.9,1425.3 1952.1,1477.3 1954.6,1423.6 1957.0,1476.8 1959.5,1423.1 1962.6,1475.6 1965.7,1425.0 1968.8,1477.5 1972.6,1425.1 1974.7,1477.9 1977.7,1424.1 1980.8,1475.1 1984.2,1424.9 1985.7,1476.4 1989.5,1422.8 1991.0,1475.8 1995.3,1422.8 1998.6,1477.6 2002.4,1424.4 2004.4,1477.3 2008.2,1424.1 2012.0,1476.8 2014.3,1425.4 2017.8,1476.5 2020.9,1424.7 2024.5,1475.3 2027.1,1425.0 2030.5,1475.4 2034.5,1425.0 2038.7,1475.1 2042.1,1424.1 2045.7,1475.6 2048.3,1423.8 2050.0,1475.8 2054.6,1423.6 2056.3,1477.4 2059.0,1423.4 2063.5,1477.8 2065.7,1422.8 2069.1,1475.7 2071.0,1422.7 2073.7,1476.2 2078.0,1422.6 2079.6,1477.4 2081.5,1423.2 2085.2,1476.2 2087.1,1423.1 2089.3,1477.5 2093.0,1423.4 2096.1,1475.5 2098.9,1423.3 2103.2,1475.3 2105.5,1424.1 2110.0,1476.6 2111.9,1422.6 2116.3,1475.6 2118.9,1424.1 2121.8,1477.2 2126.4,1424.5 2128.4,1478.0 2131.2,1423.6 2135.1,1475.9 2138.4,1423.0 2140.1,1477.0 2142.2,1425.1 2145.1,1476.1 2149.7,1423.3 2152.7,1477.5 2156.5,1422.5 2160.5,1475.5 2164.5,1422.7 2166.6,1475.9 2168.2,1423.9 2171.0,1475.1 2174.2,1425.1 2176.4,1475.6 2179.0,1425.3 2180.5,1475.5 2182.4,1424.1 2185.4,1477.5 2189.4,1423.4 2191.7,1477.8 2193.9,1423.9 2197.6,1476.9 2201.1,1422.8 2203.7,1476.6 2208.1,1425.0 2211.6,1478.0 2214.0,1424.6 2216.1,1476.3 2218.8,1422.5 2223.4,1475.6 2225.3,1424.3 2227.5,1476.9 2230.5,1423.4 2232.9,1476.8 2236.3,1423.3 2238.2,1475.8 2240.5,1425.3 2243.6,1475.8 2246.0,1425.0 2247.5,1477.6 2249.0,1424.5 2252.6,1477.5 2255.2,1425.0 2258.4,1477.7 2260.4,1423.0 2262.0,1476.8 2263.4,1425.3 2266.1,1476.5 2269.5,1424.8 2273.5,1476.8 2275.8,1423.7 2277.1,1476.8 2280.6,1425.4 2284.5,1476.0 2287.8,1422.6 2290.1,1477.0 2293.5,1422.8 2296.0,1476.5 2299.9,1425.0 2303.2,1477.5 2307.0,1425.2 2310.0,1476.9 2312.9,1422.9 2316.6,1475.0 2319.5,1424.6 2323.6,1477.4 2328.0,1424.4 2329.8,1477.8 2331.9,1424.2 2335.4,1477.0 2339.8,1423.6 2342.6,1477.6 2347.1,1422.9 2351.4,1476.4 2354.5,1424.2 2356.6,1475.3 2361.1,1425.0 2364.4,1477.6 2368.4,1423.4 2372.6,1477.3 2375.8,1425.0 2377.6,1476.4 2379.1,1422.6 2380.9,1475.0 2385.3,1424.5 2387.5,1476.0 2391.2,1423.6 2394.5,1475.6 2395.7,1423.1 2398.5,1477.6 2401.0,1424.2 2402.8,1476.4 2404.9,1424.2 2407.2,1476.1 2408.6,1424.5 2410.3,1475.1 2413.5,1423.9 2416.1,1476.1 2419.6,1424.8 2423.4,1476.5 2428.0,1425.0 2432.1,1476.8 2434.8,1424.2 2439.0,1476.4 2442.0,1423.8 2446.3,1477.0 2447.7,1424.7 2451.9,1475.8 2455.2,1424.8 2457.4,1476.2 2458.8,1422.9 2461.6,1476.5 2464.1,1422.7 2467.7,1476.4 2469.7,1423.4 2472.2,1477.3 2473.7,1425.2 2478.2,1476.0 2482.3,1423.8 2486.2,1477.3 2490.0,1424.2 2494.2,1477.7 2498.1,1422.9 2501.2,1475.1 2502.4,1423.2 2504.6,1477.0 2506.0,1425.2 2510.0,1476.8 2512.4,1424.3 2513.7,1477.9 2518.0,1423.4 2520.9,1475.2 2525.4,1423.9 2527.3,1477.1 2531.7,1425.2 2533.5,1475.5 2535.9,1423.9 2537.7,1475.4 2542.3,1423.1 2545.6,1477.4 2549.8,1422.7 2551.4,1475.8 2553.7,1425.2 2557.8,1475.9 2559.5,1424.6 2563.9,1476.7 2565.3,1423.2 2567.6,1475.9 2569.4,1423.0 2571.4,1476.0 2575.3,1423.6 2578.8,1475.3 2582.0,1423.2 2584.2,1475.2 2587.7,1423.3 2591.1,1477.7 2595.6,1423.8 2598.6,1476.4 2599.9,1424.3 2602.1,1477.2 2606.0,1422.8 2608.2,1475.7" fill="none" stroke="#72a95d" stroke-width="2.7"/></svg>
<div class="b" style="left:956px;top:1419.5px;width:1656px;height:1.5px;background:#dcdcdc;"></div>
<div class="b" style="left:956px;top:1421px;width:1656px;height:1.6px;background:#3f8f24;"></div>
<div class="b" style="left:956px;top:1479px;width:1656px;height:2px;background:#dcdcdc;"></div>
<div class="b" style="left:956px;top:1421px;width:2.5px;height:58px;background:#2e7d10;"></div>
<div class="b" style="left:2607.5px;top:1419px;width:6px;height:86px;background:#fff;border:1.5px solid #111;border-radius:3px;"></div>
<div class="b" style="left:2604.5px;top:1433.5px;width:9px;height:36px;background:#222;border-radius:3px;"></div>
<div class="b" style="left:2607.5px;top:1486px;width:6px;height:12px;background:#bbb;"></div>
<div class="b" style="left:955.5px;top:1506.5px;width:1658px;height:2.5px;background:#1e1e1e;"></div>
<div class="b" style="left:955.3px;top:1506.5px;width:2.5px;height:9px;background:#1e1e1e;"></div>
<div class="t" style="left:906.5px;top:1519.1px;font-size:20px;color:#2b2b2b;font-weight:400;width:100px;text-align:center;">Aug</div>
<div class="b" style="left:1234.3999999999999px;top:1506.5px;width:2.5px;height:9px;background:#1e1e1e;"></div>
<div class="t" style="left:1185.6px;top:1519.1px;font-size:20px;color:#2b2b2b;font-weight:400;width:100px;text-align:center;">Sep</div>
<div class="b" style="left:1504.5px;top:1506.5px;width:2.5px;height:9px;background:#1e1e1e;"></div>
<div class="t" style="left:1455.7px;top:1519.1px;font-size:20px;color:#2b2b2b;font-weight:400;width:100px;text-align:center;">Oct</div>
<div class="b" style="left:1783.8px;top:1506.5px;width:2.5px;height:9px;background:#1e1e1e;"></div>
<div class="t" style="left:1735.0px;top:1519.1px;font-size:20px;color:#2b2b2b;font-weight:400;width:100px;text-align:center;">Nov</div>
<div class="b" style="left:2053.8px;top:1506.5px;width:2.5px;height:9px;background:#1e1e1e;"></div>
<div class="t" style="left:2005.0px;top:1519.1px;font-size:20px;color:#2b2b2b;font-weight:400;width:100px;text-align:center;">Dec</div>
<div class="b" style="left:2332.8px;top:1506.5px;width:2.5px;height:9px;background:#1e1e1e;"></div>
<div class="t" style="left:2284.0px;top:1519.1px;font-size:20px;color:#2b2b2b;font-weight:400;width:100px;text-align:center;">2024</div>
<div class="b" style="left:2611.3px;top:1506.5px;width:2.5px;height:9px;background:#1e1e1e;"></div>
<div class="b" style="left:956.5px;top:1557px;width:487.5px;height:46px;background:#fff;border:2px solid #dcdcdc;border-radius:6px;"></div>
<div class="b" style="left:1236.5px;top:1559px;width:70px;height:42px;background:#eef3f9;"></div>
<div class="b" style="left:1022.25px;top:1558px;width:1.5px;height:44px;background:#dcdcdc;"></div>
<div class="b" style="left:1094.95px;top:1558px;width:1.5px;height:44px;background:#dcdcdc;"></div>
<div class="b" style="left:1165.25px;top:1558px;width:1.5px;height:44px;background:#dcdcdc;"></div>
<div class="b" style="left:1234.85px;top:1558px;width:1.5px;height:44px;background:#dcdcdc;"></div>
<div class="b" style="left:1306.45px;top:1558px;width:1.5px;height:44px;background:#dcdcdc;"></div>
<div class="b" style="left:1369.45px;top:1558px;width:1.5px;height:44px;background:#dcdcdc;"></div>
<div class="t" style="left:956.5px;top:1569.5px;font-size:23px;color:#1f2328;font-weight:400;width:66.5px;text-align:center;">1D</div>
<div class="t" style="left:1023.0px;top:1569.5px;font-size:23px;color:#1f2328;font-weight:400;width:72.70000000000005px;text-align:center;">1W</div>
<div class="t" style="left:1095.7px;top:1569.5px;font-size:23px;color:#1f2328;font-weight:400;width:70.29999999999995px;text-align:center;">1M</div>
<div class="t" style="left:1166.0px;top:1569.5px;font-size:23px;color:#1f2328;font-weight:400;width:69.59999999999991px;text-align:center;">3M</div>
<div class="t" style="left:1235.6px;top:1569.5px;font-size:23px;color:#0b5cbf;font-weight:400;width:71.60000000000014px;text-align:center;">6M</div>
<div class="t" style="left:1307.2px;top:1569.5px;font-size:23px;color:#1f2328;font-weight:400;width:63.0px;text-align:center;">1Y</div>
<div class="t" style="left:1370.2px;top:1569.5px;font-size:23px;color:#1f2328;font-weight:400;width:73.79999999999995px;text-align:center;">ALL</div>
<div class="b" style="left:1478px;top:1557px;width:206px;height:46px;background:#fff;border:2px solid #dcdcdc;border-radius:6px;"></div>
<div class="b" style="left:1637.5px;top:1558px;width:1.5px;height:44px;background:#dcdcdc;"></div>
<div class="t" style="left:1495.0px;top:1569.5px;font-size:23px;color:#1f2328;font-weight:400;transform:scaleX(1.0277);transform-origin:0 50%;">CUSTOM</div>
<svg class="s" style="left:1608.5px;top:1574px;" width="16" height="9" viewBox="0 0 16 9"><path d="M0 9 L16 9 L8 0Z" fill="#999"/></svg>
<svg class="s" style="left:1649px;top:1573px;" width="24" height="20" viewBox="0 0 24 20"><rect x="1" y="1" width="22" height="18" rx="1.5" fill="none" stroke="#444" stroke-width="1.8"/><path d="M5 8 V5 H8 M16 5 H19 V8 M19 12 V15 H16 M8 15 H5 V12" fill="none" stroke="#444" stroke-width="1.5"/></svg>
<svg class="s" style="left:0px;top:0px;" width="2700" height="1740" viewBox="0 0 2700 1740"><path d="M186.00 116.00 L822.00 116.00" stroke="#7000ff" stroke-width="4.2" stroke-dasharray="23.6 8.200" stroke-dashoffset="11.8"/><path d="M186.00 1261.90 L822.00 1261.90" stroke="#7000ff" stroke-width="4.2" stroke-dasharray="23.6 8.200" stroke-dashoffset="11.8"/><path d="M188.10 113.90 L188.10 1264.00" stroke="#7000ff" stroke-width="4.2" stroke-dasharray="23.6 8.347" stroke-dashoffset="11.8"/><path d="M819.90 113.90 L819.90 1264.00" stroke="#7000ff" stroke-width="4.2" stroke-dasharray="23.6 8.347" stroke-dashoffset="11.8"/><path d="M84.60 216.10 L167.60 216.10" stroke="#7000ff" stroke-width="4.2" stroke-dasharray="23.6 4.067" stroke-dashoffset="11.8"/><path d="M84.60 291.80 L167.60 291.80" stroke="#7000ff" stroke-width="4.2" stroke-dasharray="23.6 4.067" stroke-dashoffset="11.8"/><path d="M86.70 214.00 L86.70 293.90" stroke="#7000ff" stroke-width="4.2" stroke-dasharray="23.6 3.033" stroke-dashoffset="11.8"/><path d="M165.50 214.00 L165.50 293.90" stroke="#7000ff" stroke-width="4.2" stroke-dasharray="23.6 3.033" stroke-dashoffset="11.8"/><path d="M288.20 316.90 L467.50 316.90" stroke="#7000ff" stroke-width="4.2" stroke-dasharray="23.6 6.283" stroke-dashoffset="11.8"/><path d="M288.20 357.50 L467.50 357.50" stroke="#7000ff" stroke-width="4.2" stroke-dasharray="23.6 6.283" stroke-dashoffset="11.8"/><path d="M290.30 314.80 L290.30 359.60" stroke="#7000ff" stroke-width="4.2" stroke-dasharray="23.6 21.200" stroke-dashoffset="11.8"/><path d="M465.40 314.80 L465.40 359.60" stroke="#7000ff" stroke-width="4.2" stroke-dasharray="23.6 21.200" stroke-dashoffset="11.8"/>
<path d="M168 225.8 H845" stroke="#7000ff" stroke-width="3.6"/>
<path d="M182.5 211.7 L168 225.8 L182.5 240" fill="none" stroke="#7000ff" stroke-width="3.6" stroke-linecap="round" stroke-linejoin="round"/>
<path d="M472 319.7 H845" stroke="#7000ff" stroke-width="3.6"/>
<path d="M486.8 306 L472 319.7 L486.8 333.8" fill="none" stroke="#7000ff" stroke-width="3.6" stroke-linecap="round" stroke-linejoin="round"/>
</svg>
<div class="b" style="left:342px;top:82.6px;width:323.6px;height:63.2px;background:#7000ff;border-radius:13px;"></div>
<div class="t" style="left:342.0px;top:98.3px;font-size:32px;color:#fff;font-weight:700;width:323.6px;text-align:center;transform:scaleX(0.9183);transform-origin:50% 50%;">Tag Builder menu</div>
<div class="b" style="left:842.7px;top:194.9px;width:374.3px;height:62px;background:#fff;border:4px solid #7000ff;border-radius:14px;"></div>
<div class="t" style="left:842.7px;top:210.4px;font-size:32px;color:#7000ff;font-weight:700;width:374.3px;text-align:center;transform:scaleX(0.9390);transform-origin:50% 50%;">Open Tag Builder Menu</div>
<div class="b" style="left:842.7px;top:288.8px;width:238.3px;height:62.2px;background:#fff;border:4px solid #7000ff;border-radius:14px;"></div>
<div class="t" style="left:842.7px;top:304.3px;font-size:32px;color:#7000ff;font-weight:700;width:238.3px;text-align:center;transform:scaleX(0.9445);transform-origin:50% 50%;">Create new tag</div>
</body></html>
